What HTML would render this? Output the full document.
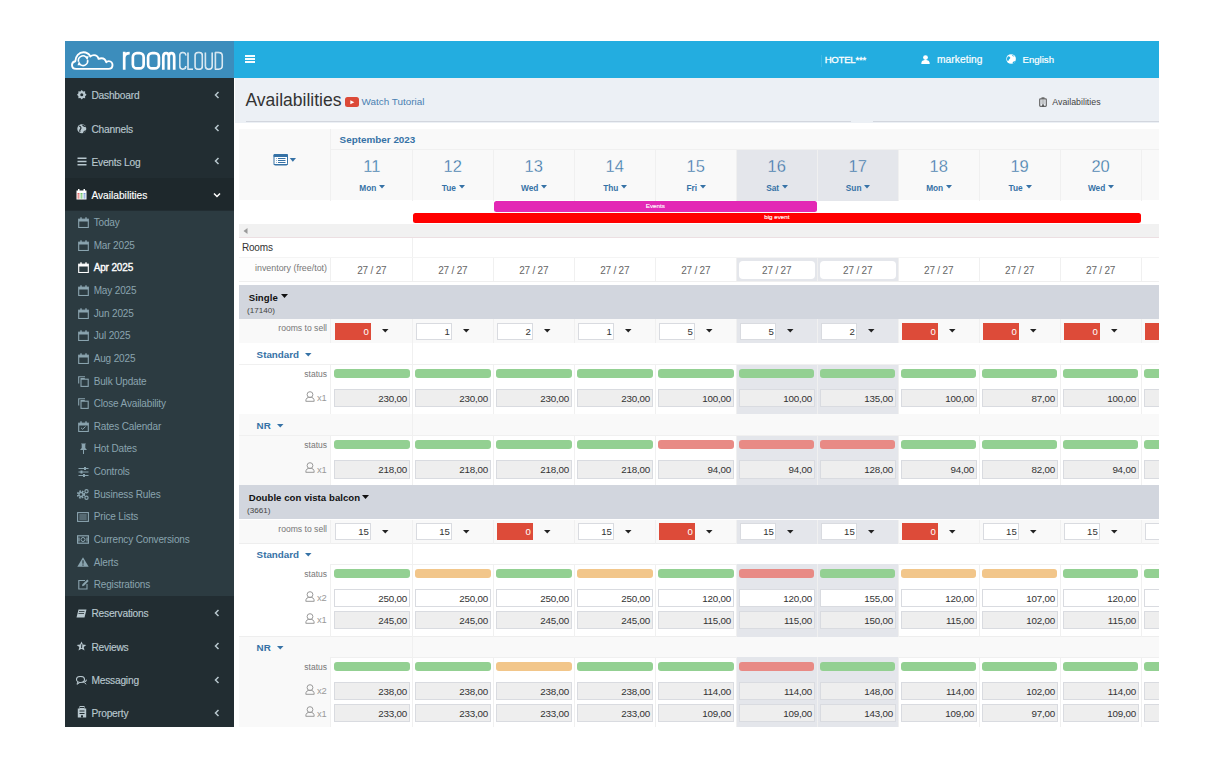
<!DOCTYPE html><html><head><meta charset="utf-8"><style>
html,body{margin:0;padding:0;background:#fff;width:1224px;height:768px;overflow:hidden;position:relative;font-family:"Liberation Sans", sans-serif}
.t{position:absolute;white-space:nowrap;}
.r{position:absolute;box-sizing:border-box;}
#clip{position:absolute;left:0;top:0;width:1159px;height:727px;overflow:hidden;}
</style></head><body>
<div class="r" style="left:65.00px;top:41.00px;width:169.00px;height:37.00px;background:#3c8dbc"></div>
<div class="r" style="left:234.00px;top:41.00px;width:925.00px;height:37.00px;background:#23ade0"></div>
<svg class="r" style="left:68.00px;top:46.00px;" width="50" height="28" viewBox="0 0 50 28"><path d="M8.2 22.9 C5.5 22.9 4 21.2 4 19 C4 17 5.3 15.6 7.3 15.2 C7.5 10 11 6.3 15.5 6.3 C18.6 6.3 21 8 22.4 10.4 C23.2 9.6 24.6 9.1 26 9.1 C28.3 9.1 30 10.6 30.6 12.9 C31.3 12.5 32.3 12.2 33.5 12.2 C35.8 12.2 37.6 13.8 38.3 16.3 C38.8 15.6 39.8 15.1 40.8 15.1 C43.1 15.1 44.5 17 44.5 19 C44.5 21.2 43 22.9 40.5 22.9 Z" fill="none" stroke="#fff" stroke-width="1.9" stroke-linejoin="round"/><path d="M10.6 15.8 A4.6 4.6 0 0 1 18.0 11.0 M19.6 14.0 A4.6 4.6 0 0 1 12.2 18.5" fill="none" stroke="#fff" stroke-width="1.6"/><path d="M16.6 10.3 L20.7 10.2 L19.3 14.2 Z M13.6 19.2 L9.5 19.3 L10.9 15.3 Z" fill="#fff"/></svg>
<svg class="r" style="left:118.00px;top:46.00px;" width="110" height="28" viewBox="0 0 110 28"><g fill="none" stroke="#fff" stroke-width="2.7"><path d="M6.2 23.8 V5.8 M6.2 11.5 C6.5 8.5 8.5 7.15 11.7 7.15"/><rect x="14.85" y="7.15" width="10.8" height="15.3" rx="4"/><rect x="30.1" y="7.15" width="10.8" height="15.3" rx="4"/><path d="M45.3 23.8 V10.8 C45.3 8.3 46.6 7.15 48.1 7.15 C49.6 7.15 50.8 8.3 50.8 10.8 V23.8 M50.8 10.8 C50.8 8.3 52 7.15 53.4 7.15 C54.9 7.15 56.2 8.3 56.2 10.8 V23.8"/></g><g fill="none" stroke="#fff" stroke-width="1.5" stroke-linejoin="round"><path d="M67.8 9.6 C67.8 7.4 66.6 6.5 64.8 6.5 C62.9 6.5 61.8 7.4 61.8 9.6 V20.1 C61.8 22.3 62.9 23.2 64.8 23.2 C66.6 23.2 67.8 22.3 67.8 20.1"/><path d="M70 6.5 V23.2 H75"/><rect x="77.1" y="6.5" width="7.2" height="16.7" rx="3"/><path d="M87.4 6.5 V20 C87.4 22.3 88.8 23.2 90.8 23.2 C92.8 23.2 94.2 22.3 94.2 20 V6.5"/><path d="M97.4 6.5 V23.2 H100.6 C103 23.2 104.3 22 104.3 19.6 V10.1 C104.3 7.7 103 6.5 100.6 6.5 Z"/></g><g fill="none" stroke="#3c8dbc" stroke-width="0.45" opacity="0.55"><path d="M67.8 9.6 C67.8 7.4 66.6 6.5 64.8 6.5 C62.9 6.5 61.8 7.4 61.8 9.6 V20.1 C61.8 22.3 62.9 23.2 64.8 23.2 C66.6 23.2 67.8 22.3 67.8 20.1"/><path d="M70 6.5 V23.2 H75"/><rect x="77.1" y="6.5" width="7.2" height="16.7" rx="3"/><path d="M87.4 6.5 V20 C87.4 22.3 88.8 23.2 90.8 23.2 C92.8 23.2 94.2 22.3 94.2 20 V6.5"/><path d="M97.4 6.5 V23.2 H100.6 C103 23.2 104.3 22 104.3 19.6 V10.1 C104.3 7.7 103 6.5 100.6 6.5 Z"/></g></svg>
<div class="r" style="left:245.00px;top:55.00px;width:10.00px;height:2.00px;background:#f4fcff"></div>
<div class="r" style="left:245.00px;top:58.10px;width:10.00px;height:2.00px;background:#f4fcff"></div>
<div class="r" style="left:245.00px;top:61.20px;width:10.00px;height:2.00px;background:#f4fcff"></div>
<div class="r" style="left:821.00px;top:55.00px;width:1.00px;height:12.00px;background:rgba(255,255,255,0.12)"></div>
<div class="t" style="left:824.70px;top:55.07px;width:600px;font-size:9.6px;line-height:9.6px;color:#fff;font-weight:normal;text-align:left;letter-spacing:-0.25px;-webkit-text-stroke:0.3px #fff">HOTEL***</div>
<svg class="r" style="left:920.50px;top:55.00px;" width="9" height="9" viewBox="0 0 9 9"><circle cx="4.5" cy="2.6" r="2.4" fill="#fff"/><path d="M0.3 9 C0.3 5.8 2 5.1 4.5 5.1 C7 5.1 8.7 5.8 8.7 9 Z" fill="#fff"/></svg>
<div class="t" style="left:937.00px;top:54.67px;width:600px;font-size:10.2px;line-height:10.2px;color:#fff;font-weight:normal;text-align:left;letter-spacing:0.1px;-webkit-text-stroke:0.2px #fff">marketing</div>
<svg class="r" style="left:1005.50px;top:54.30px;" width="11" height="11" viewBox="0 0 11 11"><circle cx="5.1" cy="5" r="4.8" fill="#fff"/><path d="M2.3 2.2 C3.6 2.4 4.6 3.2 4.2 4.3 C3.8 5.2 2.8 5.4 2.6 6.6 C2.5 7.3 1.5 7 1.1 6.2 C0.6 4.6 1.2 3.1 2.3 2.2 Z M6.6 9.3 C6.5 8.2 7.3 7.4 8.3 7.3 C9 7.3 9.2 7.8 8.9 8.3 C8.3 9 7.5 9.3 6.6 9.3 Z M5.6 0.6 C6.4 1.4 7.8 1.6 8.6 2.3 C7.6 2.6 6.2 2.4 5.6 0.6 Z" fill="#23ade0"/></svg>
<div class="t" style="left:1022.50px;top:55.17px;width:600px;font-size:9.6px;line-height:9.6px;color:#fff;font-weight:normal;text-align:left;-webkit-text-stroke:0.2px #fff">English</div>
<div class="r" style="left:65.00px;top:78.00px;width:169.00px;height:649.00px;background:#222d32"></div>
<div class="r" style="left:65.00px;top:178.20px;width:169.00px;height:32.30px;background:#1e282c"></div>
<div class="r" style="left:65.00px;top:210.50px;width:169.00px;height:385.00px;background:#2c3b41"></div>
<div class="t" style="left:91.40px;top:90.97px;width:600px;font-size:10.2px;line-height:10.2px;color:#b8c7ce;font-weight:normal;text-align:left;letter-spacing:-0.2px;-webkit-text-stroke:0.15px #b8c7ce">Dashboard</div>
<svg class="r" style="left:214.00px;top:90.50px;" width="6" height="8" viewBox="0 0 6 8"><path d="M4.5 1 L1.5 4 L4.5 7" fill="none" stroke="#b8c7ce" stroke-width="1.5"/></svg>
<div class="t" style="left:91.40px;top:124.67px;width:600px;font-size:10.2px;line-height:10.2px;color:#b8c7ce;font-weight:normal;text-align:left;letter-spacing:-0.2px;-webkit-text-stroke:0.15px #b8c7ce">Channels</div>
<svg class="r" style="left:214.00px;top:124.20px;" width="6" height="8" viewBox="0 0 6 8"><path d="M4.5 1 L1.5 4 L4.5 7" fill="none" stroke="#b8c7ce" stroke-width="1.5"/></svg>
<div class="t" style="left:91.40px;top:157.87px;width:600px;font-size:10.2px;line-height:10.2px;color:#b8c7ce;font-weight:normal;text-align:left;letter-spacing:-0.2px;-webkit-text-stroke:0.15px #b8c7ce">Events Log</div>
<svg class="r" style="left:214.00px;top:157.40px;" width="6" height="8" viewBox="0 0 6 8"><path d="M4.5 1 L1.5 4 L4.5 7" fill="none" stroke="#b8c7ce" stroke-width="1.5"/></svg>
<div class="t" style="left:91.40px;top:190.67px;width:600px;font-size:10.2px;line-height:10.2px;color:#fff;font-weight:normal;text-align:left;letter-spacing:0px;-webkit-text-stroke:0.15px #fff">Availabilities</div>
<svg class="r" style="left:213.00px;top:192.20px;" width="8" height="6" viewBox="0 0 8 6"><path d="M1 1.5 L4 4.5 L7 1.5" fill="none" stroke="#fff" stroke-width="1.5"/></svg>
<div class="t" style="left:91.40px;top:609.37px;width:600px;font-size:10.2px;line-height:10.2px;color:#b8c7ce;font-weight:normal;text-align:left;letter-spacing:-0.2px;-webkit-text-stroke:0.15px #b8c7ce">Reservations</div>
<svg class="r" style="left:214.00px;top:609.00px;" width="6" height="8" viewBox="0 0 6 8"><path d="M4.5 1 L1.5 4 L4.5 7" fill="none" stroke="#b8c7ce" stroke-width="1.5"/></svg>
<div class="t" style="left:91.40px;top:642.77px;width:600px;font-size:10.2px;line-height:10.2px;color:#b8c7ce;font-weight:normal;text-align:left;letter-spacing:-0.2px;-webkit-text-stroke:0.15px #b8c7ce">Reviews</div>
<svg class="r" style="left:214.00px;top:642.40px;" width="6" height="8" viewBox="0 0 6 8"><path d="M4.5 1 L1.5 4 L4.5 7" fill="none" stroke="#b8c7ce" stroke-width="1.5"/></svg>
<div class="t" style="left:91.40px;top:675.87px;width:600px;font-size:10.2px;line-height:10.2px;color:#b8c7ce;font-weight:normal;text-align:left;letter-spacing:-0.2px;-webkit-text-stroke:0.15px #b8c7ce">Messaging</div>
<svg class="r" style="left:214.00px;top:675.50px;" width="6" height="8" viewBox="0 0 6 8"><path d="M4.5 1 L1.5 4 L4.5 7" fill="none" stroke="#b8c7ce" stroke-width="1.5"/></svg>
<div class="t" style="left:91.40px;top:709.07px;width:600px;font-size:10.2px;line-height:10.2px;color:#b8c7ce;font-weight:normal;text-align:left;letter-spacing:-0.2px;-webkit-text-stroke:0.15px #b8c7ce">Property</div>
<svg class="r" style="left:214.00px;top:708.70px;" width="6" height="8" viewBox="0 0 6 8"><path d="M4.5 1 L1.5 4 L4.5 7" fill="none" stroke="#b8c7ce" stroke-width="1.5"/></svg>
<svg class="r" style="left:76.90px;top:90.20px;" width="10" height="10" viewBox="0 0 10 10"><polygon points="9.55,4.75 8.08,6.13 8.14,8.14 6.13,8.08 4.75,9.55 3.37,8.08 1.36,8.14 1.42,6.13 -0.05,4.75 1.42,3.37 1.36,1.36 3.37,1.42 4.75,-0.05 6.13,1.42 8.14,1.36 8.08,3.37" fill="#b8c7ce"/><circle cx="4.75" cy="4.75" r="1.5" fill="#222d32"/></svg>
<svg class="r" style="left:77.00px;top:124.40px;" width="10" height="10" viewBox="0 0 10 10"><circle cx="4.8" cy="4.8" r="4.5" fill="#b8c7ce"/><path d="M2.2 2 C4 2.8 4.5 4 3.5 5 C2.5 6 2.5 7 3 8.3 M6.5 8.8 C6.8 7.6 7.8 7 8.9 6.8 M5.5 1 C6.5 2 7.5 2.5 8.8 2.6" fill="none" stroke="#222d32" stroke-width="1.1"/></svg>
<svg class="r" style="left:77.00px;top:156.50px;" width="10" height="9" viewBox="0 0 10 9"><path d="M0.5 1.2 H9.5 M0.5 4.5 H9.5 M0.5 7.8 H9.5" stroke="#b8c7ce" stroke-width="1.5"/></svg>
<svg class="r" style="left:76.20px;top:189.40px;" width="11" height="11" viewBox="0 0 11 11"><rect x="0.5" y="1.5" width="10" height="9" fill="#fff"/><rect x="2" y="0" width="1.5" height="3" fill="#fff"/><rect x="7.5" y="0" width="1.5" height="3" fill="#fff"/><rect x="1.5" y="4" width="2" height="5.5" fill="#e06a6a"/><rect x="4.5" y="4" width="2" height="5.5" fill="#6ac46a"/><rect x="7.5" y="4" width="2" height="5.5" fill="#7a9ad8"/><path d="M1 6 H10 M1 8 H10" stroke="#fff" stroke-width="0.6"/></svg>
<svg class="r" style="left:76.00px;top:608.80px;" width="11" height="9" viewBox="0 0 11 9"><path d="M2.5 0.5 H10.5 L8.5 8.5 H0.5 Z" fill="#b8c7ce"/><path d="M3 2.5 H8.5 M2.5 4.5 H8" stroke="#222d32" stroke-width="0.8"/></svg>
<svg class="r" style="left:76.00px;top:641.30px;" width="11" height="10" viewBox="0 0 11 10"><path d="M5.5 0.5 L6.9 3.6 L10.3 3.9 L7.7 6.1 L8.5 9.5 L5.5 7.7 L2.5 9.5 L3.3 6.1 L0.7 3.9 L4.1 3.6 Z" fill="#b8c7ce"/><path d="M5.8 3.2 L5.6 7" stroke="#222d32" stroke-width="1"/></svg>
<svg class="r" style="left:76.00px;top:675.50px;" width="11" height="9" viewBox="0 0 11 9"><ellipse cx="4.5" cy="3.5" rx="4" ry="3" fill="none" stroke="#b8c7ce" stroke-width="1.1"/><path d="M6.5 6.3 C8.8 6.4 10.4 5.2 10.3 3.6" fill="none" stroke="#b8c7ce" stroke-width="1.1"/><path d="M1.8 6 L1 8.3 L3.8 6.5 M8.5 6.5 L10 8.3" fill="none" stroke="#b8c7ce" stroke-width="1"/></svg>
<svg class="r" style="left:76.80px;top:706.20px;" width="10" height="12" viewBox="0 0 10 12"><rect x="3" y="0.5" width="4" height="2" fill="none" stroke="#b8c7ce" stroke-width="1"/><rect x="0.8" y="2.5" width="8.4" height="9" fill="#b8c7ce"/><path d="M2.5 5 H7.5 M2.5 7.5 H7.5" stroke="#222d32" stroke-width="1"/><rect x="4" y="9.3" width="2" height="2.2" fill="#222d32"/></svg>
<div class="t" style="left:93.70px;top:218.23px;width:600px;font-size:10px;line-height:10px;color:#8aa4af;font-weight:normal;text-align:left;letter-spacing:-0.15px">Today</div>
<svg class="r" style="left:78.20px;top:217.20px;" width="11" height="11" viewBox="0 0 11 11"><rect x="0.7" y="2.2" width="9.6" height="8.3" fill="none" stroke="#8aa4af" stroke-width="1.1"/><rect x="0.7" y="2.2" width="9.6" height="2.3" fill="#8aa4af"/><rect x="2.3" y="0.3" width="1.4" height="3" fill="#8aa4af"/><rect x="7.3" y="0.3" width="1.4" height="3" fill="#8aa4af"/></svg>
<div class="t" style="left:93.70px;top:240.85px;width:600px;font-size:10px;line-height:10px;color:#8aa4af;font-weight:normal;text-align:left;letter-spacing:-0.15px">Mar 2025</div>
<svg class="r" style="left:78.20px;top:239.82px;" width="11" height="11" viewBox="0 0 11 11"><rect x="0.7" y="2.2" width="9.6" height="8.3" fill="none" stroke="#8aa4af" stroke-width="1.1"/><rect x="0.7" y="2.2" width="9.6" height="2.3" fill="#8aa4af"/><rect x="2.3" y="0.3" width="1.4" height="3" fill="#8aa4af"/><rect x="7.3" y="0.3" width="1.4" height="3" fill="#8aa4af"/></svg>
<div class="t" style="left:93.70px;top:263.48px;width:600px;font-size:10px;line-height:10px;color:#fff;font-weight:normal;text-align:left;letter-spacing:-0.15px;-webkit-text-stroke:0.35px #fff">Apr 2025</div>
<svg class="r" style="left:78.20px;top:262.44px;" width="11" height="11" viewBox="0 0 11 11"><rect x="0.7" y="2.2" width="9.6" height="8.3" fill="none" stroke="#fff" stroke-width="1.1"/><rect x="0.7" y="2.2" width="9.6" height="2.3" fill="#fff"/><rect x="2.3" y="0.3" width="1.4" height="3" fill="#fff"/><rect x="7.3" y="0.3" width="1.4" height="3" fill="#fff"/></svg>
<div class="t" style="left:93.70px;top:286.10px;width:600px;font-size:10px;line-height:10px;color:#8aa4af;font-weight:normal;text-align:left;letter-spacing:-0.15px">May 2025</div>
<svg class="r" style="left:78.20px;top:285.06px;" width="11" height="11" viewBox="0 0 11 11"><rect x="0.7" y="2.2" width="9.6" height="8.3" fill="none" stroke="#8aa4af" stroke-width="1.1"/><rect x="0.7" y="2.2" width="9.6" height="2.3" fill="#8aa4af"/><rect x="2.3" y="0.3" width="1.4" height="3" fill="#8aa4af"/><rect x="7.3" y="0.3" width="1.4" height="3" fill="#8aa4af"/></svg>
<div class="t" style="left:93.70px;top:308.72px;width:600px;font-size:10px;line-height:10px;color:#8aa4af;font-weight:normal;text-align:left;letter-spacing:-0.15px">Jun 2025</div>
<svg class="r" style="left:78.20px;top:307.68px;" width="11" height="11" viewBox="0 0 11 11"><rect x="0.7" y="2.2" width="9.6" height="8.3" fill="none" stroke="#8aa4af" stroke-width="1.1"/><rect x="0.7" y="2.2" width="9.6" height="2.3" fill="#8aa4af"/><rect x="2.3" y="0.3" width="1.4" height="3" fill="#8aa4af"/><rect x="7.3" y="0.3" width="1.4" height="3" fill="#8aa4af"/></svg>
<div class="t" style="left:93.70px;top:331.34px;width:600px;font-size:10px;line-height:10px;color:#8aa4af;font-weight:normal;text-align:left;letter-spacing:-0.15px">Jul 2025</div>
<svg class="r" style="left:78.20px;top:330.30px;" width="11" height="11" viewBox="0 0 11 11"><rect x="0.7" y="2.2" width="9.6" height="8.3" fill="none" stroke="#8aa4af" stroke-width="1.1"/><rect x="0.7" y="2.2" width="9.6" height="2.3" fill="#8aa4af"/><rect x="2.3" y="0.3" width="1.4" height="3" fill="#8aa4af"/><rect x="7.3" y="0.3" width="1.4" height="3" fill="#8aa4af"/></svg>
<div class="t" style="left:93.70px;top:353.95px;width:600px;font-size:10px;line-height:10px;color:#8aa4af;font-weight:normal;text-align:left;letter-spacing:-0.15px">Aug 2025</div>
<svg class="r" style="left:78.20px;top:352.92px;" width="11" height="11" viewBox="0 0 11 11"><rect x="0.7" y="2.2" width="9.6" height="8.3" fill="none" stroke="#8aa4af" stroke-width="1.1"/><rect x="0.7" y="2.2" width="9.6" height="2.3" fill="#8aa4af"/><rect x="2.3" y="0.3" width="1.4" height="3" fill="#8aa4af"/><rect x="7.3" y="0.3" width="1.4" height="3" fill="#8aa4af"/></svg>
<div class="t" style="left:93.70px;top:376.57px;width:600px;font-size:10px;line-height:10px;color:#8aa4af;font-weight:normal;text-align:left;letter-spacing:-0.15px">Bulk Update</div>
<svg class="r" style="left:78.20px;top:375.54px;" width="11" height="11" viewBox="0 0 11 11"><path d="M0.7 7.5 V0.7 H7" fill="none" stroke="#8aa4af" stroke-width="1.1"/><path d="M2.6 2.5 H6.8" fill="none" stroke="#8aa4af" stroke-width="1"/><rect x="3" y="3.2" width="7.2" height="7.2" fill="none" stroke="#8aa4af" stroke-width="1.1"/></svg>
<div class="t" style="left:93.70px;top:399.19px;width:600px;font-size:10px;line-height:10px;color:#8aa4af;font-weight:normal;text-align:left;letter-spacing:-0.15px">Close Availability</div>
<svg class="r" style="left:78.20px;top:398.16px;" width="11" height="11" viewBox="0 0 11 11"><path d="M0.7 7.5 V0.7 H7" fill="none" stroke="#8aa4af" stroke-width="1.1"/><path d="M2.6 2.5 H6.8" fill="none" stroke="#8aa4af" stroke-width="1"/><rect x="3" y="3.2" width="7.2" height="7.2" fill="none" stroke="#8aa4af" stroke-width="1.1"/></svg>
<div class="t" style="left:93.70px;top:421.81px;width:600px;font-size:10px;line-height:10px;color:#8aa4af;font-weight:normal;text-align:left;letter-spacing:-0.15px">Rates Calendar</div>
<svg class="r" style="left:78.20px;top:420.78px;" width="11" height="11" viewBox="0 0 11 11"><rect x="0.7" y="2.2" width="9.6" height="8.3" fill="none" stroke="#8aa4af" stroke-width="1.1"/><rect x="0.7" y="2.2" width="9.6" height="2.3" fill="#8aa4af"/><rect x="2.3" y="0.3" width="1.4" height="3" fill="#8aa4af"/><rect x="7.3" y="0.3" width="1.4" height="3" fill="#8aa4af"/><path d="M3 6.8 L4.6 8.3 L7.5 5.5" fill="none" stroke="#8aa4af" stroke-width="1"/></svg>
<div class="t" style="left:93.70px;top:444.44px;width:600px;font-size:10px;line-height:10px;color:#8aa4af;font-weight:normal;text-align:left;letter-spacing:-0.15px">Hot Dates</div>
<svg class="r" style="left:78.80px;top:443.40px;" width="9" height="11" viewBox="0 0 9 11"><path d="M2 0.5 H7 L6.3 1.5 V5 L8 7 H1 L2.7 5 V1.5 Z" fill="#8aa4af"/><rect x="4" y="7" width="1" height="4" fill="#8aa4af"/></svg>
<div class="t" style="left:93.70px;top:467.06px;width:600px;font-size:10px;line-height:10px;color:#8aa4af;font-weight:normal;text-align:left;letter-spacing:-0.15px">Controls</div>
<svg class="r" style="left:77.60px;top:466.52px;" width="11" height="10" viewBox="0 0 11 10"><path d="M0.5 1.5 H10.5 M0.5 5 H10.5 M0.5 8.5 H10.5" stroke="#8aa4af" stroke-width="1"/><rect x="6" y="0" width="2" height="3" fill="#8aa4af"/><rect x="2.5" y="3.5" width="2" height="3" fill="#8aa4af"/><rect x="5" y="7" width="2" height="3" fill="#8aa4af"/></svg>
<div class="t" style="left:93.70px;top:489.68px;width:600px;font-size:10px;line-height:10px;color:#8aa4af;font-weight:normal;text-align:left;letter-spacing:-0.15px">Business Rules</div>
<svg class="r" style="left:77.30px;top:488.64px;" width="12" height="11" viewBox="0 0 12 11"><circle cx="4" cy="5.5" r="3.2" fill="none" stroke="#8aa4af" stroke-width="2" stroke-dasharray="1.6 1"/><circle cx="4" cy="5.5" r="2" fill="none" stroke="#8aa4af" stroke-width="1.3"/><circle cx="9.5" cy="2.3" r="1.6" fill="none" stroke="#8aa4af" stroke-width="1.2"/><circle cx="9.5" cy="8.7" r="1.6" fill="none" stroke="#8aa4af" stroke-width="1.2"/></svg>
<div class="t" style="left:93.70px;top:512.29px;width:600px;font-size:10px;line-height:10px;color:#8aa4af;font-weight:normal;text-align:left;letter-spacing:-0.15px">Price Lists</div>
<svg class="r" style="left:77.30px;top:511.76px;" width="12" height="10" viewBox="0 0 12 10"><rect x="0.6" y="0.6" width="10.8" height="8.8" fill="none" stroke="#8aa4af" stroke-width="1.1"/><path d="M2.3 3 H9.7 M2.3 5 H9.7 M2.3 7 H9.7" stroke="#8aa4af" stroke-width="0.9"/></svg>
<div class="t" style="left:93.70px;top:534.91px;width:600px;font-size:10px;line-height:10px;color:#8aa4af;font-weight:normal;text-align:left;letter-spacing:-0.15px">Currency Conversions</div>
<svg class="r" style="left:77.30px;top:534.88px;" width="12" height="9" viewBox="0 0 12 9"><rect x="0.6" y="0.8" width="10.8" height="7.4" fill="none" stroke="#8aa4af" stroke-width="1.2"/><circle cx="6" cy="4.5" r="2" fill="none" stroke="#8aa4af" stroke-width="1"/><path d="M2 2.5 V6.5 M10 2.5 V6.5" stroke="#8aa4af" stroke-width="1.2"/></svg>
<div class="t" style="left:93.70px;top:557.53px;width:600px;font-size:10px;line-height:10px;color:#8aa4af;font-weight:normal;text-align:left;letter-spacing:-0.15px">Alerts</div>
<svg class="r" style="left:77.30px;top:557.00px;" width="12" height="10" viewBox="0 0 12 10"><path d="M6 0.3 L11.7 9.7 H0.3 Z" fill="#8aa4af"/><rect x="5.4" y="3.3" width="1.2" height="3.4" fill="#2c3b41"/><rect x="5.4" y="7.5" width="1.2" height="1.2" fill="#2c3b41"/></svg>
<div class="t" style="left:93.70px;top:580.15px;width:600px;font-size:10px;line-height:10px;color:#8aa4af;font-weight:normal;text-align:left;letter-spacing:-0.15px">Registrations</div>
<svg class="r" style="left:77.80px;top:579.12px;" width="11" height="11" viewBox="0 0 11 11"><path d="M7 1.5 H0.8 V10 H9 V5" fill="none" stroke="#8aa4af" stroke-width="1.1"/><path d="M4 7.2 L4.5 5.3 L9.3 0.6 L10.7 2 L6 6.7 Z" fill="#8aa4af"/></svg>
<div class="r" style="left:234.00px;top:78.00px;width:925.00px;height:649.00px;background:#ecf0f5"></div>
<div class="r" style="left:234.00px;top:78.00px;width:1.20px;height:649.00px;background:#fff"></div>
<div class="t" style="left:245.50px;top:92.29px;width:600px;font-size:17.5px;line-height:17.5px;color:#333;font-weight:normal;text-align:left;">Availabilities</div>
<div class="r" style="left:345.20px;top:96.80px;width:13.50px;height:10.00px;background:#dc4a38;border-radius:2.5px"></div>
<svg class="r" style="left:350.00px;top:99.60px;" width="5" height="5" viewBox="0 0 5 5"><path d="M0.3 0.3 L4.3 2.3 L0.3 4.3 Z" fill="#fff"/></svg>
<div class="t" style="left:361.60px;top:97.42px;width:600px;font-size:9.9px;line-height:9.9px;color:#4a80b2;font-weight:normal;text-align:left;">Watch Tutorial</div>
<div class="t" style="left:1052.30px;top:97.95px;width:600px;font-size:8.8px;line-height:8.8px;color:#444;font-weight:normal;text-align:left;">Availabilities</div>
<svg class="r" style="left:1039.00px;top:96.80px;" width="8" height="10" viewBox="0 0 8 10"><rect x="0.7" y="1.8" width="6.6" height="7.5" rx="0.8" fill="none" stroke="#666" stroke-width="1.2"/><rect x="2.5" y="0.3" width="3" height="1.8" fill="#666"/><path d="M2.3 4 H5.7 M2.3 6 H5.7" stroke="#888" stroke-width="0.9"/><rect x="3.3" y="7.3" width="1.4" height="2" fill="#333"/></svg>
<div class="r" style="left:245.50px;top:120.60px;width:605.00px;height:1.60px;background:#d2d6de"></div>
<div class="r" style="left:873.20px;top:120.60px;width:285.80px;height:1.60px;background:#d2d6de"></div>
<div class="r" style="left:235.20px;top:122.60px;width:923.80px;height:604.40px;background:#fff"></div>
<div id="clip">
<div class="r" style="left:239.00px;top:129.30px;width:920.00px;height:71.20px;background:#f9f9f9"></div>
<div class="r" style="left:330.50px;top:149.00px;width:828.50px;height:1.00px;background:#f0f0f0"></div>
<div class="r" style="left:329.80px;top:149.00px;width:1.00px;height:51.50px;background:#f0f0f0"></div>
<div class="r" style="left:411.90px;top:149.00px;width:1.00px;height:51.50px;background:#f0f0f0"></div>
<div class="r" style="left:492.87px;top:149.00px;width:1.00px;height:51.50px;background:#f0f0f0"></div>
<div class="r" style="left:573.84px;top:149.00px;width:1.00px;height:51.50px;background:#f0f0f0"></div>
<div class="r" style="left:654.81px;top:149.00px;width:1.00px;height:51.50px;background:#f0f0f0"></div>
<div class="r" style="left:735.78px;top:149.00px;width:1.00px;height:51.50px;background:#f0f0f0"></div>
<div class="r" style="left:816.75px;top:149.00px;width:1.00px;height:51.50px;background:#f0f0f0"></div>
<div class="r" style="left:897.72px;top:149.00px;width:1.00px;height:51.50px;background:#f0f0f0"></div>
<div class="r" style="left:978.69px;top:149.00px;width:1.00px;height:51.50px;background:#f0f0f0"></div>
<div class="r" style="left:1059.66px;top:149.00px;width:1.00px;height:51.50px;background:#f0f0f0"></div>
<div class="r" style="left:1140.63px;top:149.00px;width:1.00px;height:51.50px;background:#f0f0f0"></div>
<div class="r" style="left:330.00px;top:129.30px;width:1.00px;height:71.20px;background:#f0f0f0"></div>
<div class="r" style="left:736.78px;top:150.00px;width:79.97px;height:50.50px;background:#e4e6eb"></div>
<div class="r" style="left:817.75px;top:150.00px;width:79.97px;height:50.50px;background:#e4e6eb"></div>
<div class="t" style="left:339.60px;top:135.12px;width:600px;font-size:9.9px;line-height:9.9px;color:#3672a6;font-weight:bold;text-align:left;">September 2023</div>
<div class="t" style="left:71.80px;top:157.73px;width:600px;font-size:16.5px;line-height:16.5px;color:#3672a6;font-weight:normal;text-align:center;-webkit-text-stroke:0.3px #f9f9f9">11</div>
<div class="t" style="left:67.80px;top:184.17px;width:600px;font-size:8.3px;line-height:8.3px;color:#3672a6;font-weight:bold;text-align:center;">Mon</div>
<svg class="r" style="left:379.15px;top:185.40px;" width="7" height="4" viewBox="0 0 7 4"><path d="M0 0 L6 0 L3 3.5 Z" fill="#3672a6"/></svg>
<div class="t" style="left:152.78px;top:157.73px;width:600px;font-size:16.5px;line-height:16.5px;color:#3672a6;font-weight:normal;text-align:center;-webkit-text-stroke:0.3px #f9f9f9">12</div>
<div class="t" style="left:148.78px;top:184.17px;width:600px;font-size:8.3px;line-height:8.3px;color:#3672a6;font-weight:bold;text-align:center;">Tue</div>
<svg class="r" style="left:458.98px;top:185.40px;" width="7" height="4" viewBox="0 0 7 4"><path d="M0 0 L6 0 L3 3.5 Z" fill="#3672a6"/></svg>
<div class="t" style="left:233.76px;top:157.73px;width:600px;font-size:16.5px;line-height:16.5px;color:#3672a6;font-weight:normal;text-align:center;-webkit-text-stroke:0.3px #f9f9f9">13</div>
<div class="t" style="left:229.76px;top:184.17px;width:600px;font-size:8.3px;line-height:8.3px;color:#3672a6;font-weight:bold;text-align:center;">Wed</div>
<svg class="r" style="left:540.96px;top:185.40px;" width="7" height="4" viewBox="0 0 7 4"><path d="M0 0 L6 0 L3 3.5 Z" fill="#3672a6"/></svg>
<div class="t" style="left:314.74px;top:157.73px;width:600px;font-size:16.5px;line-height:16.5px;color:#3672a6;font-weight:normal;text-align:center;-webkit-text-stroke:0.3px #f9f9f9">14</div>
<div class="t" style="left:310.74px;top:184.17px;width:600px;font-size:8.3px;line-height:8.3px;color:#3672a6;font-weight:bold;text-align:center;">Thu</div>
<svg class="r" style="left:620.94px;top:185.40px;" width="7" height="4" viewBox="0 0 7 4"><path d="M0 0 L6 0 L3 3.5 Z" fill="#3672a6"/></svg>
<div class="t" style="left:395.72px;top:157.73px;width:600px;font-size:16.5px;line-height:16.5px;color:#3672a6;font-weight:normal;text-align:center;-webkit-text-stroke:0.3px #f9f9f9">15</div>
<div class="t" style="left:391.72px;top:184.17px;width:600px;font-size:8.3px;line-height:8.3px;color:#3672a6;font-weight:bold;text-align:center;">Fri</div>
<svg class="r" style="left:699.92px;top:185.40px;" width="7" height="4" viewBox="0 0 7 4"><path d="M0 0 L6 0 L3 3.5 Z" fill="#3672a6"/></svg>
<div class="t" style="left:476.70px;top:157.73px;width:600px;font-size:16.5px;line-height:16.5px;color:#3672a6;font-weight:normal;text-align:center;-webkit-text-stroke:0.3px #e4e6eb">16</div>
<div class="t" style="left:472.70px;top:184.17px;width:600px;font-size:8.3px;line-height:8.3px;color:#3672a6;font-weight:bold;text-align:center;">Sat</div>
<svg class="r" style="left:781.90px;top:185.40px;" width="7" height="4" viewBox="0 0 7 4"><path d="M0 0 L6 0 L3 3.5 Z" fill="#3672a6"/></svg>
<div class="t" style="left:557.68px;top:157.73px;width:600px;font-size:16.5px;line-height:16.5px;color:#3672a6;font-weight:normal;text-align:center;-webkit-text-stroke:0.3px #e4e6eb">17</div>
<div class="t" style="left:553.68px;top:184.17px;width:600px;font-size:8.3px;line-height:8.3px;color:#3672a6;font-weight:bold;text-align:center;">Sun</div>
<svg class="r" style="left:863.88px;top:185.40px;" width="7" height="4" viewBox="0 0 7 4"><path d="M0 0 L6 0 L3 3.5 Z" fill="#3672a6"/></svg>
<div class="t" style="left:638.66px;top:157.73px;width:600px;font-size:16.5px;line-height:16.5px;color:#3672a6;font-weight:normal;text-align:center;-webkit-text-stroke:0.3px #f9f9f9">18</div>
<div class="t" style="left:634.66px;top:184.17px;width:600px;font-size:8.3px;line-height:8.3px;color:#3672a6;font-weight:bold;text-align:center;">Mon</div>
<svg class="r" style="left:946.01px;top:185.40px;" width="7" height="4" viewBox="0 0 7 4"><path d="M0 0 L6 0 L3 3.5 Z" fill="#3672a6"/></svg>
<div class="t" style="left:719.64px;top:157.73px;width:600px;font-size:16.5px;line-height:16.5px;color:#3672a6;font-weight:normal;text-align:center;-webkit-text-stroke:0.3px #f9f9f9">19</div>
<div class="t" style="left:715.64px;top:184.17px;width:600px;font-size:8.3px;line-height:8.3px;color:#3672a6;font-weight:bold;text-align:center;">Tue</div>
<svg class="r" style="left:1025.84px;top:185.40px;" width="7" height="4" viewBox="0 0 7 4"><path d="M0 0 L6 0 L3 3.5 Z" fill="#3672a6"/></svg>
<div class="t" style="left:800.62px;top:157.73px;width:600px;font-size:16.5px;line-height:16.5px;color:#3672a6;font-weight:normal;text-align:center;-webkit-text-stroke:0.3px #f9f9f9">20</div>
<div class="t" style="left:796.62px;top:184.17px;width:600px;font-size:8.3px;line-height:8.3px;color:#3672a6;font-weight:bold;text-align:center;">Wed</div>
<svg class="r" style="left:1107.82px;top:185.40px;" width="7" height="4" viewBox="0 0 7 4"><path d="M0 0 L6 0 L3 3.5 Z" fill="#3672a6"/></svg>
<div class="t" style="left:881.60px;top:157.73px;width:600px;font-size:16.5px;line-height:16.5px;color:#3672a6;font-weight:normal;text-align:center;-webkit-text-stroke:0.3px #f9f9f9">21</div>
<div class="t" style="left:877.60px;top:184.17px;width:600px;font-size:8.3px;line-height:8.3px;color:#3672a6;font-weight:bold;text-align:center;">Thu</div>
<svg class="r" style="left:1187.80px;top:185.40px;" width="7" height="4" viewBox="0 0 7 4"><path d="M0 0 L6 0 L3 3.5 Z" fill="#3672a6"/></svg>
<svg class="r" style="left:273.00px;top:153.00px;" width="24" height="13" viewBox="0 0 24 13"><rect x="1" y="1.5" width="13.5" height="10.5" rx="1.2" fill="#fff" stroke="#3672a6" stroke-width="1"/><rect x="0.5" y="1" width="14.5" height="3" rx="1" fill="#3672a6"/><path d="M0.8 11.5 H14.7" stroke="#3672a6" stroke-width="1"/><path d="M5 5.5 H12.5 M5 7.5 H12.5 M5 9.5 H12.5" stroke="#3672a6" stroke-width="1"/><path d="M3 5.5 H4 M3 7.5 H4 M3 9.5 H4" stroke="#3672a6" stroke-width="1" opacity="0.5"/><path d="M16.7 5 L23 5 L19.85 8.7 Z" fill="#3672a6"/></svg>
<div class="r" style="left:494.00px;top:201.00px;width:322.70px;height:10.70px;background:#e328b5;border-radius:2.5px"></div>
<div class="t" style="left:355.30px;top:202.65px;width:600px;font-size:6.2px;line-height:6.2px;color:#fff;font-weight:normal;text-align:center;-webkit-text-stroke:0.15px #fff">Events</div>
<div class="r" style="left:412.70px;top:212.70px;width:728.10px;height:10.60px;background:#ff0000;border-radius:2.5px"></div>
<div class="t" style="left:476.80px;top:214.35px;width:600px;font-size:6.2px;line-height:6.2px;color:#fff;font-weight:normal;text-align:center;-webkit-text-stroke:0.15px #fff">big event</div>
<div class="r" style="left:238.50px;top:224.00px;width:920.50px;height:13.50px;background:#f1f1f1;border-bottom:1px solid #ecdfe2"></div>
<svg class="r" style="left:242.50px;top:228.00px;" width="5" height="6" viewBox="0 0 5 6"><path d="M4.5 0 L0.5 3 L4.5 6 Z" fill="#9a9a9a"/></svg>
<div class="t" style="left:241.90px;top:243.13px;width:600px;font-size:10px;line-height:10px;color:#333;font-weight:normal;text-align:left;letter-spacing:-0.15px">Rooms</div>
<div class="r" style="left:412.00px;top:237.50px;width:1.00px;height:20.30px;background:#f0f0f0"></div>
<div class="r" style="left:239.00px;top:257.30px;width:920.00px;height:1.00px;background:#f4f4f4"></div>
<div class="r" style="left:239.00px;top:258.30px;width:91.50px;height:22.70px;background:#fdfdfd"></div>
<div class="t" style="left:-273.00px;top:263.87px;width:600px;font-size:8.9px;line-height:8.9px;color:#777;font-weight:normal;text-align:right;">inventory (free/tot)</div>
<div class="r" style="left:329.80px;top:258.30px;width:1.00px;height:22.70px;background:#f0f0f0"></div>
<div class="t" style="left:71.80px;top:265.54px;width:600px;font-size:10px;line-height:10px;color:#666;font-weight:normal;text-align:center;letter-spacing:-0.2px">27 / 27</div>
<div class="r" style="left:411.90px;top:258.30px;width:1.00px;height:22.70px;background:#f0f0f0"></div>
<div class="t" style="left:152.78px;top:265.54px;width:600px;font-size:10px;line-height:10px;color:#666;font-weight:normal;text-align:center;letter-spacing:-0.2px">27 / 27</div>
<div class="r" style="left:492.87px;top:258.30px;width:1.00px;height:22.70px;background:#f0f0f0"></div>
<div class="t" style="left:233.76px;top:265.54px;width:600px;font-size:10px;line-height:10px;color:#666;font-weight:normal;text-align:center;letter-spacing:-0.2px">27 / 27</div>
<div class="r" style="left:573.84px;top:258.30px;width:1.00px;height:22.70px;background:#f0f0f0"></div>
<div class="t" style="left:314.74px;top:265.54px;width:600px;font-size:10px;line-height:10px;color:#666;font-weight:normal;text-align:center;letter-spacing:-0.2px">27 / 27</div>
<div class="r" style="left:654.81px;top:258.30px;width:1.00px;height:22.70px;background:#f0f0f0"></div>
<div class="t" style="left:395.72px;top:265.54px;width:600px;font-size:10px;line-height:10px;color:#666;font-weight:normal;text-align:center;letter-spacing:-0.2px">27 / 27</div>
<div class="r" style="left:735.78px;top:258.30px;width:1.00px;height:22.70px;background:#f0f0f0"></div>
<div class="r" style="left:736.78px;top:258.30px;width:79.97px;height:22.70px;background:#e4e6eb"></div>
<div class="r" style="left:739.10px;top:261.00px;width:75.80px;height:18.30px;background:#fff;border-radius:4px"></div>
<div class="t" style="left:476.70px;top:265.54px;width:600px;font-size:10px;line-height:10px;color:#666;font-weight:normal;text-align:center;letter-spacing:-0.2px">27 / 27</div>
<div class="r" style="left:816.75px;top:258.30px;width:1.00px;height:22.70px;background:#f0f0f0"></div>
<div class="r" style="left:817.75px;top:258.30px;width:79.97px;height:22.70px;background:#e4e6eb"></div>
<div class="r" style="left:820.08px;top:261.00px;width:75.80px;height:18.30px;background:#fff;border-radius:4px"></div>
<div class="t" style="left:557.68px;top:265.54px;width:600px;font-size:10px;line-height:10px;color:#666;font-weight:normal;text-align:center;letter-spacing:-0.2px">27 / 27</div>
<div class="r" style="left:897.72px;top:258.30px;width:1.00px;height:22.70px;background:#f0f0f0"></div>
<div class="t" style="left:638.66px;top:265.54px;width:600px;font-size:10px;line-height:10px;color:#666;font-weight:normal;text-align:center;letter-spacing:-0.2px">27 / 27</div>
<div class="r" style="left:978.69px;top:258.30px;width:1.00px;height:22.70px;background:#f0f0f0"></div>
<div class="t" style="left:719.64px;top:265.54px;width:600px;font-size:10px;line-height:10px;color:#666;font-weight:normal;text-align:center;letter-spacing:-0.2px">27 / 27</div>
<div class="r" style="left:1059.66px;top:258.30px;width:1.00px;height:22.70px;background:#f0f0f0"></div>
<div class="t" style="left:800.62px;top:265.54px;width:600px;font-size:10px;line-height:10px;color:#666;font-weight:normal;text-align:center;letter-spacing:-0.2px">27 / 27</div>
<div class="r" style="left:1140.63px;top:258.30px;width:1.00px;height:22.70px;background:#f0f0f0"></div>
<div class="t" style="left:881.60px;top:265.54px;width:600px;font-size:10px;line-height:10px;color:#666;font-weight:normal;text-align:center;letter-spacing:-0.2px">27 / 27</div>
<div class="r" style="left:239.00px;top:281.00px;width:920.00px;height:1.00px;background:#efefef"></div>
<div class="r" style="left:238.50px;top:285.00px;width:920.50px;height:34.30px;background:#d2d6de"></div>
<div class="t" style="left:248.70px;top:292.77px;width:600px;font-size:9.6px;line-height:9.6px;color:#111;font-weight:bold;text-align:left;letter-spacing:0.05px">Single</div>
<svg class="r" style="left:280.50px;top:294.30px;" width="8" height="5" viewBox="0 0 8 5"><path d="M0 0 L7 0 L3.5 4 Z" fill="#111"/></svg>
<div class="t" style="left:247.00px;top:306.74px;width:600px;font-size:8.1px;line-height:8.1px;color:#444;font-weight:normal;text-align:left;">(17140)</div>
<div class="r" style="left:239.00px;top:319.30px;width:920.00px;height:24.10px;background:#f9f9f9"></div>
<div class="r" style="left:239.00px;top:342.90px;width:920.00px;height:1.00px;background:#eeeeee"></div>
<div class="t" style="left:-273.00px;top:324.32px;width:600px;font-size:8.6px;line-height:8.6px;color:#777;font-weight:normal;text-align:right;">rooms to sell</div>
<div class="r" style="left:329.80px;top:319.30px;width:1.00px;height:24.10px;background:#f0f0f0"></div>
<div class="r" style="left:334.80px;top:322.50px;width:36.50px;height:17.00px;background:#dd4b39"></div>
<div class="t" style="left:-231.10px;top:326.97px;width:600px;font-size:9.6px;line-height:9.6px;color:#fff;font-weight:normal;text-align:right;">0</div>
<svg class="r" style="left:382.05px;top:329.30px;" width="7" height="4" viewBox="0 0 7 4"><path d="M0 0 L6.5 0 L3.25 3.5 Z" fill="#222"/></svg>
<div class="r" style="left:411.90px;top:319.30px;width:1.00px;height:24.10px;background:#f0f0f0"></div>
<div class="r" style="left:415.78px;top:322.50px;width:36.50px;height:17.00px;background:#fff;border:1px solid #d9dbe0"></div>
<div class="t" style="left:-150.12px;top:326.97px;width:600px;font-size:9.6px;line-height:9.6px;color:#333;font-weight:normal;text-align:right;">1</div>
<svg class="r" style="left:463.03px;top:329.30px;" width="7" height="4" viewBox="0 0 7 4"><path d="M0 0 L6.5 0 L3.25 3.5 Z" fill="#222"/></svg>
<div class="r" style="left:492.87px;top:319.30px;width:1.00px;height:24.10px;background:#f0f0f0"></div>
<div class="r" style="left:496.76px;top:322.50px;width:36.50px;height:17.00px;background:#fff;border:1px solid #d9dbe0"></div>
<div class="t" style="left:-69.14px;top:326.97px;width:600px;font-size:9.6px;line-height:9.6px;color:#333;font-weight:normal;text-align:right;">2</div>
<svg class="r" style="left:544.01px;top:329.30px;" width="7" height="4" viewBox="0 0 7 4"><path d="M0 0 L6.5 0 L3.25 3.5 Z" fill="#222"/></svg>
<div class="r" style="left:573.84px;top:319.30px;width:1.00px;height:24.10px;background:#f0f0f0"></div>
<div class="r" style="left:577.74px;top:322.50px;width:36.50px;height:17.00px;background:#fff;border:1px solid #d9dbe0"></div>
<div class="t" style="left:11.84px;top:326.97px;width:600px;font-size:9.6px;line-height:9.6px;color:#333;font-weight:normal;text-align:right;">1</div>
<svg class="r" style="left:624.99px;top:329.30px;" width="7" height="4" viewBox="0 0 7 4"><path d="M0 0 L6.5 0 L3.25 3.5 Z" fill="#222"/></svg>
<div class="r" style="left:654.81px;top:319.30px;width:1.00px;height:24.10px;background:#f0f0f0"></div>
<div class="r" style="left:658.72px;top:322.50px;width:36.50px;height:17.00px;background:#fff;border:1px solid #d9dbe0"></div>
<div class="t" style="left:92.82px;top:326.97px;width:600px;font-size:9.6px;line-height:9.6px;color:#333;font-weight:normal;text-align:right;">5</div>
<svg class="r" style="left:705.97px;top:329.30px;" width="7" height="4" viewBox="0 0 7 4"><path d="M0 0 L6.5 0 L3.25 3.5 Z" fill="#222"/></svg>
<div class="r" style="left:735.78px;top:319.30px;width:1.00px;height:24.10px;background:#f0f0f0"></div>
<div class="r" style="left:736.78px;top:319.30px;width:79.97px;height:24.10px;background:#e4e6eb"></div>
<div class="r" style="left:739.70px;top:322.50px;width:36.50px;height:17.00px;background:#fff;border:1px solid #d9dbe0"></div>
<div class="t" style="left:173.80px;top:326.97px;width:600px;font-size:9.6px;line-height:9.6px;color:#333;font-weight:normal;text-align:right;">5</div>
<svg class="r" style="left:786.95px;top:329.30px;" width="7" height="4" viewBox="0 0 7 4"><path d="M0 0 L6.5 0 L3.25 3.5 Z" fill="#222"/></svg>
<div class="r" style="left:816.75px;top:319.30px;width:1.00px;height:24.10px;background:#f0f0f0"></div>
<div class="r" style="left:817.75px;top:319.30px;width:79.97px;height:24.10px;background:#e4e6eb"></div>
<div class="r" style="left:820.68px;top:322.50px;width:36.50px;height:17.00px;background:#fff;border:1px solid #d9dbe0"></div>
<div class="t" style="left:254.78px;top:326.97px;width:600px;font-size:9.6px;line-height:9.6px;color:#333;font-weight:normal;text-align:right;">2</div>
<svg class="r" style="left:867.93px;top:329.30px;" width="7" height="4" viewBox="0 0 7 4"><path d="M0 0 L6.5 0 L3.25 3.5 Z" fill="#222"/></svg>
<div class="r" style="left:897.72px;top:319.30px;width:1.00px;height:24.10px;background:#f0f0f0"></div>
<div class="r" style="left:901.66px;top:322.50px;width:36.50px;height:17.00px;background:#dd4b39"></div>
<div class="t" style="left:335.76px;top:326.97px;width:600px;font-size:9.6px;line-height:9.6px;color:#fff;font-weight:normal;text-align:right;">0</div>
<svg class="r" style="left:948.91px;top:329.30px;" width="7" height="4" viewBox="0 0 7 4"><path d="M0 0 L6.5 0 L3.25 3.5 Z" fill="#222"/></svg>
<div class="r" style="left:978.69px;top:319.30px;width:1.00px;height:24.10px;background:#f0f0f0"></div>
<div class="r" style="left:982.64px;top:322.50px;width:36.50px;height:17.00px;background:#dd4b39"></div>
<div class="t" style="left:416.74px;top:326.97px;width:600px;font-size:9.6px;line-height:9.6px;color:#fff;font-weight:normal;text-align:right;">0</div>
<svg class="r" style="left:1029.89px;top:329.30px;" width="7" height="4" viewBox="0 0 7 4"><path d="M0 0 L6.5 0 L3.25 3.5 Z" fill="#222"/></svg>
<div class="r" style="left:1059.66px;top:319.30px;width:1.00px;height:24.10px;background:#f0f0f0"></div>
<div class="r" style="left:1063.62px;top:322.50px;width:36.50px;height:17.00px;background:#dd4b39"></div>
<div class="t" style="left:497.72px;top:326.97px;width:600px;font-size:9.6px;line-height:9.6px;color:#fff;font-weight:normal;text-align:right;">0</div>
<svg class="r" style="left:1110.87px;top:329.30px;" width="7" height="4" viewBox="0 0 7 4"><path d="M0 0 L6.5 0 L3.25 3.5 Z" fill="#222"/></svg>
<div class="r" style="left:1140.63px;top:319.30px;width:1.00px;height:24.10px;background:#f0f0f0"></div>
<div class="r" style="left:1144.60px;top:322.50px;width:36.50px;height:17.00px;background:#dd4b39"></div>
<div class="t" style="left:578.70px;top:326.97px;width:600px;font-size:9.6px;line-height:9.6px;color:#fff;font-weight:normal;text-align:right;">0</div>
<svg class="r" style="left:1191.85px;top:329.30px;" width="7" height="4" viewBox="0 0 7 4"><path d="M0 0 L6.5 0 L3.25 3.5 Z" fill="#222"/></svg>
<div class="r" style="left:239.00px;top:343.40px;width:920.00px;height:21.10px;background:#fff"></div>
<div class="r" style="left:412.00px;top:343.40px;width:1.00px;height:21.10px;background:#f0f0f0"></div>
<div class="r" style="left:239.00px;top:364.00px;width:920.00px;height:1.00px;background:#f0f0f0"></div>
<div class="t" style="left:256.60px;top:350.30px;width:600px;font-size:9.8px;line-height:9.8px;color:#3672a6;font-weight:bold;text-align:left;">Standard</div>
<svg class="r" style="left:305.27px;top:352.90px;" width="7" height="4" viewBox="0 0 7 4"><path d="M0 0 L6.5 0 L3.25 3.5 Z" fill="#3672a6"/></svg>
<div class="r" style="left:239.00px;top:364.50px;width:91.50px;height:49.50px;background:#fff"></div>
<div class="r" style="left:239.00px;top:413.50px;width:920.00px;height:1.00px;background:#eeeeee"></div>
<div class="t" style="left:-273.00px;top:370.00px;width:600px;font-size:8.5px;line-height:8.5px;color:#777;font-weight:normal;text-align:right;">status</div>
<div class="r" style="left:329.80px;top:364.50px;width:1.00px;height:49.50px;background:#f0f0f0"></div>
<div class="r" style="left:334.00px;top:369.10px;width:75.60px;height:9.10px;background:#93d092;border-radius:3px"></div>
<div class="r" style="left:411.90px;top:364.50px;width:1.00px;height:49.50px;background:#f0f0f0"></div>
<div class="r" style="left:414.98px;top:369.10px;width:75.60px;height:9.10px;background:#93d092;border-radius:3px"></div>
<div class="r" style="left:492.87px;top:364.50px;width:1.00px;height:49.50px;background:#f0f0f0"></div>
<div class="r" style="left:495.96px;top:369.10px;width:75.60px;height:9.10px;background:#93d092;border-radius:3px"></div>
<div class="r" style="left:573.84px;top:364.50px;width:1.00px;height:49.50px;background:#f0f0f0"></div>
<div class="r" style="left:576.94px;top:369.10px;width:75.60px;height:9.10px;background:#93d092;border-radius:3px"></div>
<div class="r" style="left:654.81px;top:364.50px;width:1.00px;height:49.50px;background:#f0f0f0"></div>
<div class="r" style="left:657.92px;top:369.10px;width:75.60px;height:9.10px;background:#93d092;border-radius:3px"></div>
<div class="r" style="left:735.78px;top:364.50px;width:1.00px;height:49.50px;background:#f0f0f0"></div>
<div class="r" style="left:736.78px;top:364.50px;width:79.97px;height:49.50px;background:#e4e6eb"></div>
<div class="r" style="left:738.90px;top:369.10px;width:75.60px;height:9.10px;background:#93d092;border-radius:3px"></div>
<div class="r" style="left:816.75px;top:364.50px;width:1.00px;height:49.50px;background:#f0f0f0"></div>
<div class="r" style="left:817.75px;top:364.50px;width:79.97px;height:49.50px;background:#e4e6eb"></div>
<div class="r" style="left:819.88px;top:369.10px;width:75.60px;height:9.10px;background:#93d092;border-radius:3px"></div>
<div class="r" style="left:897.72px;top:364.50px;width:1.00px;height:49.50px;background:#f0f0f0"></div>
<div class="r" style="left:900.86px;top:369.10px;width:75.60px;height:9.10px;background:#93d092;border-radius:3px"></div>
<div class="r" style="left:978.69px;top:364.50px;width:1.00px;height:49.50px;background:#f0f0f0"></div>
<div class="r" style="left:981.84px;top:369.10px;width:75.60px;height:9.10px;background:#93d092;border-radius:3px"></div>
<div class="r" style="left:1059.66px;top:364.50px;width:1.00px;height:49.50px;background:#f0f0f0"></div>
<div class="r" style="left:1062.82px;top:369.10px;width:75.60px;height:9.10px;background:#93d092;border-radius:3px"></div>
<div class="r" style="left:1140.63px;top:364.50px;width:1.00px;height:49.50px;background:#f0f0f0"></div>
<div class="r" style="left:1143.80px;top:369.10px;width:75.60px;height:9.10px;background:#93d092;border-radius:3px"></div>
<svg class="r" style="left:305.40px;top:391.10px;" width="10" height="11" viewBox="0 0 10 11"><circle cx="5" cy="3.6" r="2.9" fill="none" stroke="#999" stroke-width="1"/><path d="M0.8 10.3 C0.8 7 2.5 6.3 5 6.3 C7.5 6.3 9.2 7 9.2 10.3 Z" fill="none" stroke="#999" stroke-width="1" stroke-linejoin="round"/></svg>
<div class="t" style="left:316.90px;top:393.44px;width:600px;font-size:9.4px;line-height:9.4px;color:#999;font-weight:normal;text-align:left;">x1</div>
<div class="r" style="left:334.00px;top:389.10px;width:76.40px;height:18.30px;background:#eeeeee;border:1px solid #d9dbe0"></div>
<div class="t" style="left:-192.90px;top:394.10px;width:600px;font-size:9.8px;line-height:9.8px;color:#333;font-weight:normal;text-align:right;letter-spacing:-0.2px">230,00</div>
<div class="r" style="left:414.98px;top:389.10px;width:76.40px;height:18.30px;background:#eeeeee;border:1px solid #d9dbe0"></div>
<div class="t" style="left:-111.92px;top:394.10px;width:600px;font-size:9.8px;line-height:9.8px;color:#333;font-weight:normal;text-align:right;letter-spacing:-0.2px">230,00</div>
<div class="r" style="left:495.96px;top:389.10px;width:76.40px;height:18.30px;background:#eeeeee;border:1px solid #d9dbe0"></div>
<div class="t" style="left:-30.94px;top:394.10px;width:600px;font-size:9.8px;line-height:9.8px;color:#333;font-weight:normal;text-align:right;letter-spacing:-0.2px">230,00</div>
<div class="r" style="left:576.94px;top:389.10px;width:76.40px;height:18.30px;background:#eeeeee;border:1px solid #d9dbe0"></div>
<div class="t" style="left:50.04px;top:394.10px;width:600px;font-size:9.8px;line-height:9.8px;color:#333;font-weight:normal;text-align:right;letter-spacing:-0.2px">230,00</div>
<div class="r" style="left:657.92px;top:389.10px;width:76.40px;height:18.30px;background:#eeeeee;border:1px solid #d9dbe0"></div>
<div class="t" style="left:131.02px;top:394.10px;width:600px;font-size:9.8px;line-height:9.8px;color:#333;font-weight:normal;text-align:right;letter-spacing:-0.2px">100,00</div>
<div class="r" style="left:738.90px;top:389.10px;width:76.40px;height:18.30px;background:#eeeeee;border:1px solid #d9dbe0"></div>
<div class="t" style="left:212.00px;top:394.10px;width:600px;font-size:9.8px;line-height:9.8px;color:#333;font-weight:normal;text-align:right;letter-spacing:-0.2px">100,00</div>
<div class="r" style="left:819.88px;top:389.10px;width:76.40px;height:18.30px;background:#eeeeee;border:1px solid #d9dbe0"></div>
<div class="t" style="left:292.98px;top:394.10px;width:600px;font-size:9.8px;line-height:9.8px;color:#333;font-weight:normal;text-align:right;letter-spacing:-0.2px">135,00</div>
<div class="r" style="left:900.86px;top:389.10px;width:76.40px;height:18.30px;background:#eeeeee;border:1px solid #d9dbe0"></div>
<div class="t" style="left:373.96px;top:394.10px;width:600px;font-size:9.8px;line-height:9.8px;color:#333;font-weight:normal;text-align:right;letter-spacing:-0.2px">100,00</div>
<div class="r" style="left:981.84px;top:389.10px;width:76.40px;height:18.30px;background:#eeeeee;border:1px solid #d9dbe0"></div>
<div class="t" style="left:454.94px;top:394.10px;width:600px;font-size:9.8px;line-height:9.8px;color:#333;font-weight:normal;text-align:right;letter-spacing:-0.2px">87,00</div>
<div class="r" style="left:1062.82px;top:389.10px;width:76.40px;height:18.30px;background:#eeeeee;border:1px solid #d9dbe0"></div>
<div class="t" style="left:535.92px;top:394.10px;width:600px;font-size:9.8px;line-height:9.8px;color:#333;font-weight:normal;text-align:right;letter-spacing:-0.2px">100,00</div>
<div class="r" style="left:1143.80px;top:389.10px;width:76.40px;height:18.30px;background:#eeeeee;border:1px solid #d9dbe0"></div>
<div class="t" style="left:616.90px;top:394.10px;width:600px;font-size:9.8px;line-height:9.8px;color:#333;font-weight:normal;text-align:right;letter-spacing:-0.2px">100,00</div>
<div class="r" style="left:239.00px;top:414.00px;width:920.00px;height:21.70px;background:#f9f9f9"></div>
<div class="r" style="left:412.00px;top:414.00px;width:1.00px;height:21.70px;background:#f0f0f0"></div>
<div class="r" style="left:239.00px;top:435.20px;width:920.00px;height:1.00px;background:#f0f0f0"></div>
<div class="t" style="left:256.60px;top:420.90px;width:600px;font-size:9.8px;line-height:9.8px;color:#3672a6;font-weight:bold;text-align:left;">NR</div>
<svg class="r" style="left:276.95px;top:423.50px;" width="7" height="4" viewBox="0 0 7 4"><path d="M0 0 L6.5 0 L3.25 3.5 Z" fill="#3672a6"/></svg>
<div class="r" style="left:239.00px;top:435.70px;width:91.50px;height:49.50px;background:#f9f9f9"></div>
<div class="r" style="left:239.00px;top:484.70px;width:920.00px;height:1.00px;background:#eeeeee"></div>
<div class="t" style="left:-273.00px;top:441.20px;width:600px;font-size:8.5px;line-height:8.5px;color:#777;font-weight:normal;text-align:right;">status</div>
<div class="r" style="left:329.80px;top:435.70px;width:1.00px;height:49.50px;background:#f0f0f0"></div>
<div class="r" style="left:334.00px;top:440.30px;width:75.60px;height:9.10px;background:#93d092;border-radius:3px"></div>
<div class="r" style="left:411.90px;top:435.70px;width:1.00px;height:49.50px;background:#f0f0f0"></div>
<div class="r" style="left:414.98px;top:440.30px;width:75.60px;height:9.10px;background:#93d092;border-radius:3px"></div>
<div class="r" style="left:492.87px;top:435.70px;width:1.00px;height:49.50px;background:#f0f0f0"></div>
<div class="r" style="left:495.96px;top:440.30px;width:75.60px;height:9.10px;background:#93d092;border-radius:3px"></div>
<div class="r" style="left:573.84px;top:435.70px;width:1.00px;height:49.50px;background:#f0f0f0"></div>
<div class="r" style="left:576.94px;top:440.30px;width:75.60px;height:9.10px;background:#93d092;border-radius:3px"></div>
<div class="r" style="left:654.81px;top:435.70px;width:1.00px;height:49.50px;background:#f0f0f0"></div>
<div class="r" style="left:657.92px;top:440.30px;width:75.60px;height:9.10px;background:#e88a85;border-radius:3px"></div>
<div class="r" style="left:735.78px;top:435.70px;width:1.00px;height:49.50px;background:#f0f0f0"></div>
<div class="r" style="left:736.78px;top:435.70px;width:79.97px;height:49.50px;background:#e4e6eb"></div>
<div class="r" style="left:738.90px;top:440.30px;width:75.60px;height:9.10px;background:#e88a85;border-radius:3px"></div>
<div class="r" style="left:816.75px;top:435.70px;width:1.00px;height:49.50px;background:#f0f0f0"></div>
<div class="r" style="left:817.75px;top:435.70px;width:79.97px;height:49.50px;background:#e4e6eb"></div>
<div class="r" style="left:819.88px;top:440.30px;width:75.60px;height:9.10px;background:#e88a85;border-radius:3px"></div>
<div class="r" style="left:897.72px;top:435.70px;width:1.00px;height:49.50px;background:#f0f0f0"></div>
<div class="r" style="left:900.86px;top:440.30px;width:75.60px;height:9.10px;background:#93d092;border-radius:3px"></div>
<div class="r" style="left:978.69px;top:435.70px;width:1.00px;height:49.50px;background:#f0f0f0"></div>
<div class="r" style="left:981.84px;top:440.30px;width:75.60px;height:9.10px;background:#93d092;border-radius:3px"></div>
<div class="r" style="left:1059.66px;top:435.70px;width:1.00px;height:49.50px;background:#f0f0f0"></div>
<div class="r" style="left:1062.82px;top:440.30px;width:75.60px;height:9.10px;background:#93d092;border-radius:3px"></div>
<div class="r" style="left:1140.63px;top:435.70px;width:1.00px;height:49.50px;background:#f0f0f0"></div>
<div class="r" style="left:1143.80px;top:440.30px;width:75.60px;height:9.10px;background:#93d092;border-radius:3px"></div>
<svg class="r" style="left:305.40px;top:462.30px;" width="10" height="11" viewBox="0 0 10 11"><circle cx="5" cy="3.6" r="2.9" fill="none" stroke="#999" stroke-width="1"/><path d="M0.8 10.3 C0.8 7 2.5 6.3 5 6.3 C7.5 6.3 9.2 7 9.2 10.3 Z" fill="none" stroke="#999" stroke-width="1" stroke-linejoin="round"/></svg>
<div class="t" style="left:316.90px;top:464.64px;width:600px;font-size:9.4px;line-height:9.4px;color:#999;font-weight:normal;text-align:left;">x1</div>
<div class="r" style="left:334.00px;top:460.30px;width:76.40px;height:18.30px;background:#eeeeee;border:1px solid #d9dbe0"></div>
<div class="t" style="left:-192.90px;top:465.30px;width:600px;font-size:9.8px;line-height:9.8px;color:#333;font-weight:normal;text-align:right;letter-spacing:-0.2px">218,00</div>
<div class="r" style="left:414.98px;top:460.30px;width:76.40px;height:18.30px;background:#eeeeee;border:1px solid #d9dbe0"></div>
<div class="t" style="left:-111.92px;top:465.30px;width:600px;font-size:9.8px;line-height:9.8px;color:#333;font-weight:normal;text-align:right;letter-spacing:-0.2px">218,00</div>
<div class="r" style="left:495.96px;top:460.30px;width:76.40px;height:18.30px;background:#eeeeee;border:1px solid #d9dbe0"></div>
<div class="t" style="left:-30.94px;top:465.30px;width:600px;font-size:9.8px;line-height:9.8px;color:#333;font-weight:normal;text-align:right;letter-spacing:-0.2px">218,00</div>
<div class="r" style="left:576.94px;top:460.30px;width:76.40px;height:18.30px;background:#eeeeee;border:1px solid #d9dbe0"></div>
<div class="t" style="left:50.04px;top:465.30px;width:600px;font-size:9.8px;line-height:9.8px;color:#333;font-weight:normal;text-align:right;letter-spacing:-0.2px">218,00</div>
<div class="r" style="left:657.92px;top:460.30px;width:76.40px;height:18.30px;background:#eeeeee;border:1px solid #d9dbe0"></div>
<div class="t" style="left:131.02px;top:465.30px;width:600px;font-size:9.8px;line-height:9.8px;color:#333;font-weight:normal;text-align:right;letter-spacing:-0.2px">94,00</div>
<div class="r" style="left:738.90px;top:460.30px;width:76.40px;height:18.30px;background:#eeeeee;border:1px solid #d9dbe0"></div>
<div class="t" style="left:212.00px;top:465.30px;width:600px;font-size:9.8px;line-height:9.8px;color:#333;font-weight:normal;text-align:right;letter-spacing:-0.2px">94,00</div>
<div class="r" style="left:819.88px;top:460.30px;width:76.40px;height:18.30px;background:#eeeeee;border:1px solid #d9dbe0"></div>
<div class="t" style="left:292.98px;top:465.30px;width:600px;font-size:9.8px;line-height:9.8px;color:#333;font-weight:normal;text-align:right;letter-spacing:-0.2px">128,00</div>
<div class="r" style="left:900.86px;top:460.30px;width:76.40px;height:18.30px;background:#eeeeee;border:1px solid #d9dbe0"></div>
<div class="t" style="left:373.96px;top:465.30px;width:600px;font-size:9.8px;line-height:9.8px;color:#333;font-weight:normal;text-align:right;letter-spacing:-0.2px">94,00</div>
<div class="r" style="left:981.84px;top:460.30px;width:76.40px;height:18.30px;background:#eeeeee;border:1px solid #d9dbe0"></div>
<div class="t" style="left:454.94px;top:465.30px;width:600px;font-size:9.8px;line-height:9.8px;color:#333;font-weight:normal;text-align:right;letter-spacing:-0.2px">82,00</div>
<div class="r" style="left:1062.82px;top:460.30px;width:76.40px;height:18.30px;background:#eeeeee;border:1px solid #d9dbe0"></div>
<div class="t" style="left:535.92px;top:465.30px;width:600px;font-size:9.8px;line-height:9.8px;color:#333;font-weight:normal;text-align:right;letter-spacing:-0.2px">94,00</div>
<div class="r" style="left:1143.80px;top:460.30px;width:76.40px;height:18.30px;background:#eeeeee;border:1px solid #d9dbe0"></div>
<div class="t" style="left:616.90px;top:465.30px;width:600px;font-size:9.8px;line-height:9.8px;color:#333;font-weight:normal;text-align:right;letter-spacing:-0.2px">94,00</div>
<div class="r" style="left:238.50px;top:485.20px;width:920.50px;height:34.30px;background:#d2d6de"></div>
<div class="t" style="left:248.70px;top:492.97px;width:600px;font-size:9.6px;line-height:9.6px;color:#111;font-weight:bold;text-align:left;letter-spacing:0.05px">Double con vista balcon</div>
<svg class="r" style="left:362.12px;top:494.50px;" width="8" height="5" viewBox="0 0 8 5"><path d="M0 0 L7 0 L3.5 4 Z" fill="#111"/></svg>
<div class="t" style="left:247.00px;top:506.94px;width:600px;font-size:8.1px;line-height:8.1px;color:#444;font-weight:normal;text-align:left;">(3661)</div>
<div class="r" style="left:239.00px;top:519.50px;width:920.00px;height:24.00px;background:#f9f9f9"></div>
<div class="r" style="left:239.00px;top:543.00px;width:920.00px;height:1.00px;background:#eeeeee"></div>
<div class="t" style="left:-273.00px;top:524.52px;width:600px;font-size:8.6px;line-height:8.6px;color:#777;font-weight:normal;text-align:right;">rooms to sell</div>
<div class="r" style="left:329.80px;top:519.50px;width:1.00px;height:24.00px;background:#f0f0f0"></div>
<div class="r" style="left:334.80px;top:522.70px;width:36.50px;height:17.00px;background:#fff;border:1px solid #d9dbe0"></div>
<div class="t" style="left:-231.10px;top:527.17px;width:600px;font-size:9.6px;line-height:9.6px;color:#333;font-weight:normal;text-align:right;">15</div>
<svg class="r" style="left:382.05px;top:529.50px;" width="7" height="4" viewBox="0 0 7 4"><path d="M0 0 L6.5 0 L3.25 3.5 Z" fill="#222"/></svg>
<div class="r" style="left:411.90px;top:519.50px;width:1.00px;height:24.00px;background:#f0f0f0"></div>
<div class="r" style="left:415.78px;top:522.70px;width:36.50px;height:17.00px;background:#fff;border:1px solid #d9dbe0"></div>
<div class="t" style="left:-150.12px;top:527.17px;width:600px;font-size:9.6px;line-height:9.6px;color:#333;font-weight:normal;text-align:right;">15</div>
<svg class="r" style="left:463.03px;top:529.50px;" width="7" height="4" viewBox="0 0 7 4"><path d="M0 0 L6.5 0 L3.25 3.5 Z" fill="#222"/></svg>
<div class="r" style="left:492.87px;top:519.50px;width:1.00px;height:24.00px;background:#f0f0f0"></div>
<div class="r" style="left:496.76px;top:522.70px;width:36.50px;height:17.00px;background:#dd4b39"></div>
<div class="t" style="left:-69.14px;top:527.17px;width:600px;font-size:9.6px;line-height:9.6px;color:#fff;font-weight:normal;text-align:right;">0</div>
<svg class="r" style="left:544.01px;top:529.50px;" width="7" height="4" viewBox="0 0 7 4"><path d="M0 0 L6.5 0 L3.25 3.5 Z" fill="#222"/></svg>
<div class="r" style="left:573.84px;top:519.50px;width:1.00px;height:24.00px;background:#f0f0f0"></div>
<div class="r" style="left:577.74px;top:522.70px;width:36.50px;height:17.00px;background:#fff;border:1px solid #d9dbe0"></div>
<div class="t" style="left:11.84px;top:527.17px;width:600px;font-size:9.6px;line-height:9.6px;color:#333;font-weight:normal;text-align:right;">15</div>
<svg class="r" style="left:624.99px;top:529.50px;" width="7" height="4" viewBox="0 0 7 4"><path d="M0 0 L6.5 0 L3.25 3.5 Z" fill="#222"/></svg>
<div class="r" style="left:654.81px;top:519.50px;width:1.00px;height:24.00px;background:#f0f0f0"></div>
<div class="r" style="left:658.72px;top:522.70px;width:36.50px;height:17.00px;background:#dd4b39"></div>
<div class="t" style="left:92.82px;top:527.17px;width:600px;font-size:9.6px;line-height:9.6px;color:#fff;font-weight:normal;text-align:right;">0</div>
<svg class="r" style="left:705.97px;top:529.50px;" width="7" height="4" viewBox="0 0 7 4"><path d="M0 0 L6.5 0 L3.25 3.5 Z" fill="#222"/></svg>
<div class="r" style="left:735.78px;top:519.50px;width:1.00px;height:24.00px;background:#f0f0f0"></div>
<div class="r" style="left:736.78px;top:519.50px;width:79.97px;height:24.00px;background:#e4e6eb"></div>
<div class="r" style="left:739.70px;top:522.70px;width:36.50px;height:17.00px;background:#fff;border:1px solid #d9dbe0"></div>
<div class="t" style="left:173.80px;top:527.17px;width:600px;font-size:9.6px;line-height:9.6px;color:#333;font-weight:normal;text-align:right;">15</div>
<svg class="r" style="left:786.95px;top:529.50px;" width="7" height="4" viewBox="0 0 7 4"><path d="M0 0 L6.5 0 L3.25 3.5 Z" fill="#222"/></svg>
<div class="r" style="left:816.75px;top:519.50px;width:1.00px;height:24.00px;background:#f0f0f0"></div>
<div class="r" style="left:817.75px;top:519.50px;width:79.97px;height:24.00px;background:#e4e6eb"></div>
<div class="r" style="left:820.68px;top:522.70px;width:36.50px;height:17.00px;background:#fff;border:1px solid #d9dbe0"></div>
<div class="t" style="left:254.78px;top:527.17px;width:600px;font-size:9.6px;line-height:9.6px;color:#333;font-weight:normal;text-align:right;">15</div>
<svg class="r" style="left:867.93px;top:529.50px;" width="7" height="4" viewBox="0 0 7 4"><path d="M0 0 L6.5 0 L3.25 3.5 Z" fill="#222"/></svg>
<div class="r" style="left:897.72px;top:519.50px;width:1.00px;height:24.00px;background:#f0f0f0"></div>
<div class="r" style="left:901.66px;top:522.70px;width:36.50px;height:17.00px;background:#dd4b39"></div>
<div class="t" style="left:335.76px;top:527.17px;width:600px;font-size:9.6px;line-height:9.6px;color:#fff;font-weight:normal;text-align:right;">0</div>
<svg class="r" style="left:948.91px;top:529.50px;" width="7" height="4" viewBox="0 0 7 4"><path d="M0 0 L6.5 0 L3.25 3.5 Z" fill="#222"/></svg>
<div class="r" style="left:978.69px;top:519.50px;width:1.00px;height:24.00px;background:#f0f0f0"></div>
<div class="r" style="left:982.64px;top:522.70px;width:36.50px;height:17.00px;background:#fff;border:1px solid #d9dbe0"></div>
<div class="t" style="left:416.74px;top:527.17px;width:600px;font-size:9.6px;line-height:9.6px;color:#333;font-weight:normal;text-align:right;">15</div>
<svg class="r" style="left:1029.89px;top:529.50px;" width="7" height="4" viewBox="0 0 7 4"><path d="M0 0 L6.5 0 L3.25 3.5 Z" fill="#222"/></svg>
<div class="r" style="left:1059.66px;top:519.50px;width:1.00px;height:24.00px;background:#f0f0f0"></div>
<div class="r" style="left:1063.62px;top:522.70px;width:36.50px;height:17.00px;background:#fff;border:1px solid #d9dbe0"></div>
<div class="t" style="left:497.72px;top:527.17px;width:600px;font-size:9.6px;line-height:9.6px;color:#333;font-weight:normal;text-align:right;">15</div>
<svg class="r" style="left:1110.87px;top:529.50px;" width="7" height="4" viewBox="0 0 7 4"><path d="M0 0 L6.5 0 L3.25 3.5 Z" fill="#222"/></svg>
<div class="r" style="left:1140.63px;top:519.50px;width:1.00px;height:24.00px;background:#f0f0f0"></div>
<div class="r" style="left:1144.60px;top:522.70px;width:36.50px;height:17.00px;background:#fff;border:1px solid #d9dbe0"></div>
<div class="t" style="left:578.70px;top:527.17px;width:600px;font-size:9.6px;line-height:9.6px;color:#333;font-weight:normal;text-align:right;">15</div>
<svg class="r" style="left:1191.85px;top:529.50px;" width="7" height="4" viewBox="0 0 7 4"><path d="M0 0 L6.5 0 L3.25 3.5 Z" fill="#222"/></svg>
<div class="r" style="left:239.00px;top:543.50px;width:920.00px;height:20.50px;background:#fff"></div>
<div class="r" style="left:412.00px;top:543.50px;width:1.00px;height:20.50px;background:#f0f0f0"></div>
<div class="r" style="left:239.00px;top:563.50px;width:920.00px;height:1.00px;background:#f0f0f0"></div>
<div class="t" style="left:256.60px;top:550.40px;width:600px;font-size:9.8px;line-height:9.8px;color:#3672a6;font-weight:bold;text-align:left;">Standard</div>
<svg class="r" style="left:305.27px;top:553.00px;" width="7" height="4" viewBox="0 0 7 4"><path d="M0 0 L6.5 0 L3.25 3.5 Z" fill="#3672a6"/></svg>
<div class="r" style="left:239.00px;top:564.00px;width:91.50px;height:72.50px;background:#fff"></div>
<div class="r" style="left:239.00px;top:636.00px;width:920.00px;height:1.00px;background:#eeeeee"></div>
<div class="t" style="left:-273.00px;top:569.50px;width:600px;font-size:8.5px;line-height:8.5px;color:#777;font-weight:normal;text-align:right;">status</div>
<div class="r" style="left:329.80px;top:564.00px;width:1.00px;height:72.50px;background:#f0f0f0"></div>
<div class="r" style="left:334.00px;top:568.60px;width:75.60px;height:9.10px;background:#93d092;border-radius:3px"></div>
<div class="r" style="left:411.90px;top:564.00px;width:1.00px;height:72.50px;background:#f0f0f0"></div>
<div class="r" style="left:414.98px;top:568.60px;width:75.60px;height:9.10px;background:#f2c68a;border-radius:3px"></div>
<div class="r" style="left:492.87px;top:564.00px;width:1.00px;height:72.50px;background:#f0f0f0"></div>
<div class="r" style="left:495.96px;top:568.60px;width:75.60px;height:9.10px;background:#93d092;border-radius:3px"></div>
<div class="r" style="left:573.84px;top:564.00px;width:1.00px;height:72.50px;background:#f0f0f0"></div>
<div class="r" style="left:576.94px;top:568.60px;width:75.60px;height:9.10px;background:#f2c68a;border-radius:3px"></div>
<div class="r" style="left:654.81px;top:564.00px;width:1.00px;height:72.50px;background:#f0f0f0"></div>
<div class="r" style="left:657.92px;top:568.60px;width:75.60px;height:9.10px;background:#93d092;border-radius:3px"></div>
<div class="r" style="left:735.78px;top:564.00px;width:1.00px;height:72.50px;background:#f0f0f0"></div>
<div class="r" style="left:736.78px;top:564.00px;width:79.97px;height:72.50px;background:#e4e6eb"></div>
<div class="r" style="left:738.90px;top:568.60px;width:75.60px;height:9.10px;background:#e88a85;border-radius:3px"></div>
<div class="r" style="left:816.75px;top:564.00px;width:1.00px;height:72.50px;background:#f0f0f0"></div>
<div class="r" style="left:817.75px;top:564.00px;width:79.97px;height:72.50px;background:#e4e6eb"></div>
<div class="r" style="left:819.88px;top:568.60px;width:75.60px;height:9.10px;background:#93d092;border-radius:3px"></div>
<div class="r" style="left:897.72px;top:564.00px;width:1.00px;height:72.50px;background:#f0f0f0"></div>
<div class="r" style="left:900.86px;top:568.60px;width:75.60px;height:9.10px;background:#f2c68a;border-radius:3px"></div>
<div class="r" style="left:978.69px;top:564.00px;width:1.00px;height:72.50px;background:#f0f0f0"></div>
<div class="r" style="left:981.84px;top:568.60px;width:75.60px;height:9.10px;background:#f2c68a;border-radius:3px"></div>
<div class="r" style="left:1059.66px;top:564.00px;width:1.00px;height:72.50px;background:#f0f0f0"></div>
<div class="r" style="left:1062.82px;top:568.60px;width:75.60px;height:9.10px;background:#93d092;border-radius:3px"></div>
<div class="r" style="left:1140.63px;top:564.00px;width:1.00px;height:72.50px;background:#f0f0f0"></div>
<div class="r" style="left:1143.80px;top:568.60px;width:75.60px;height:9.10px;background:#93d092;border-radius:3px"></div>
<svg class="r" style="left:305.40px;top:590.60px;" width="10" height="11" viewBox="0 0 10 11"><circle cx="5" cy="3.6" r="2.9" fill="none" stroke="#999" stroke-width="1"/><path d="M0.8 10.3 C0.8 7 2.5 6.3 5 6.3 C7.5 6.3 9.2 7 9.2 10.3 Z" fill="none" stroke="#999" stroke-width="1" stroke-linejoin="round"/></svg>
<div class="t" style="left:316.90px;top:592.94px;width:600px;font-size:9.4px;line-height:9.4px;color:#999;font-weight:normal;text-align:left;">x2</div>
<div class="r" style="left:334.00px;top:588.60px;width:76.40px;height:18.30px;background:#fff;border:1px solid #d9dbe0"></div>
<div class="t" style="left:-192.90px;top:593.60px;width:600px;font-size:9.8px;line-height:9.8px;color:#333;font-weight:normal;text-align:right;letter-spacing:-0.2px">250,00</div>
<div class="r" style="left:414.98px;top:588.60px;width:76.40px;height:18.30px;background:#fff;border:1px solid #d9dbe0"></div>
<div class="t" style="left:-111.92px;top:593.60px;width:600px;font-size:9.8px;line-height:9.8px;color:#333;font-weight:normal;text-align:right;letter-spacing:-0.2px">250,00</div>
<div class="r" style="left:495.96px;top:588.60px;width:76.40px;height:18.30px;background:#fff;border:1px solid #d9dbe0"></div>
<div class="t" style="left:-30.94px;top:593.60px;width:600px;font-size:9.8px;line-height:9.8px;color:#333;font-weight:normal;text-align:right;letter-spacing:-0.2px">250,00</div>
<div class="r" style="left:576.94px;top:588.60px;width:76.40px;height:18.30px;background:#fff;border:1px solid #d9dbe0"></div>
<div class="t" style="left:50.04px;top:593.60px;width:600px;font-size:9.8px;line-height:9.8px;color:#333;font-weight:normal;text-align:right;letter-spacing:-0.2px">250,00</div>
<div class="r" style="left:657.92px;top:588.60px;width:76.40px;height:18.30px;background:#fff;border:1px solid #d9dbe0"></div>
<div class="t" style="left:131.02px;top:593.60px;width:600px;font-size:9.8px;line-height:9.8px;color:#333;font-weight:normal;text-align:right;letter-spacing:-0.2px">120,00</div>
<div class="r" style="left:738.90px;top:588.60px;width:76.40px;height:18.30px;background:#fff;border:1px solid #d9dbe0"></div>
<div class="t" style="left:212.00px;top:593.60px;width:600px;font-size:9.8px;line-height:9.8px;color:#333;font-weight:normal;text-align:right;letter-spacing:-0.2px">120,00</div>
<div class="r" style="left:819.88px;top:588.60px;width:76.40px;height:18.30px;background:#fff;border:1px solid #d9dbe0"></div>
<div class="t" style="left:292.98px;top:593.60px;width:600px;font-size:9.8px;line-height:9.8px;color:#333;font-weight:normal;text-align:right;letter-spacing:-0.2px">155,00</div>
<div class="r" style="left:900.86px;top:588.60px;width:76.40px;height:18.30px;background:#fff;border:1px solid #d9dbe0"></div>
<div class="t" style="left:373.96px;top:593.60px;width:600px;font-size:9.8px;line-height:9.8px;color:#333;font-weight:normal;text-align:right;letter-spacing:-0.2px">120,00</div>
<div class="r" style="left:981.84px;top:588.60px;width:76.40px;height:18.30px;background:#fff;border:1px solid #d9dbe0"></div>
<div class="t" style="left:454.94px;top:593.60px;width:600px;font-size:9.8px;line-height:9.8px;color:#333;font-weight:normal;text-align:right;letter-spacing:-0.2px">107,00</div>
<div class="r" style="left:1062.82px;top:588.60px;width:76.40px;height:18.30px;background:#fff;border:1px solid #d9dbe0"></div>
<div class="t" style="left:535.92px;top:593.60px;width:600px;font-size:9.8px;line-height:9.8px;color:#333;font-weight:normal;text-align:right;letter-spacing:-0.2px">120,00</div>
<div class="r" style="left:1143.80px;top:588.60px;width:76.40px;height:18.30px;background:#fff;border:1px solid #d9dbe0"></div>
<div class="t" style="left:616.90px;top:593.60px;width:600px;font-size:9.8px;line-height:9.8px;color:#333;font-weight:normal;text-align:right;letter-spacing:-0.2px">120,00</div>
<svg class="r" style="left:305.40px;top:612.90px;" width="10" height="11" viewBox="0 0 10 11"><circle cx="5" cy="3.6" r="2.9" fill="none" stroke="#999" stroke-width="1"/><path d="M0.8 10.3 C0.8 7 2.5 6.3 5 6.3 C7.5 6.3 9.2 7 9.2 10.3 Z" fill="none" stroke="#999" stroke-width="1" stroke-linejoin="round"/></svg>
<div class="t" style="left:316.90px;top:615.24px;width:600px;font-size:9.4px;line-height:9.4px;color:#999;font-weight:normal;text-align:left;">x1</div>
<div class="r" style="left:334.00px;top:610.90px;width:76.40px;height:18.30px;background:#eeeeee;border:1px solid #d9dbe0"></div>
<div class="t" style="left:-192.90px;top:615.90px;width:600px;font-size:9.8px;line-height:9.8px;color:#333;font-weight:normal;text-align:right;letter-spacing:-0.2px">245,00</div>
<div class="r" style="left:414.98px;top:610.90px;width:76.40px;height:18.30px;background:#eeeeee;border:1px solid #d9dbe0"></div>
<div class="t" style="left:-111.92px;top:615.90px;width:600px;font-size:9.8px;line-height:9.8px;color:#333;font-weight:normal;text-align:right;letter-spacing:-0.2px">245,00</div>
<div class="r" style="left:495.96px;top:610.90px;width:76.40px;height:18.30px;background:#eeeeee;border:1px solid #d9dbe0"></div>
<div class="t" style="left:-30.94px;top:615.90px;width:600px;font-size:9.8px;line-height:9.8px;color:#333;font-weight:normal;text-align:right;letter-spacing:-0.2px">245,00</div>
<div class="r" style="left:576.94px;top:610.90px;width:76.40px;height:18.30px;background:#eeeeee;border:1px solid #d9dbe0"></div>
<div class="t" style="left:50.04px;top:615.90px;width:600px;font-size:9.8px;line-height:9.8px;color:#333;font-weight:normal;text-align:right;letter-spacing:-0.2px">245,00</div>
<div class="r" style="left:657.92px;top:610.90px;width:76.40px;height:18.30px;background:#eeeeee;border:1px solid #d9dbe0"></div>
<div class="t" style="left:131.02px;top:615.90px;width:600px;font-size:9.8px;line-height:9.8px;color:#333;font-weight:normal;text-align:right;letter-spacing:-0.2px">115,00</div>
<div class="r" style="left:738.90px;top:610.90px;width:76.40px;height:18.30px;background:#eeeeee;border:1px solid #d9dbe0"></div>
<div class="t" style="left:212.00px;top:615.90px;width:600px;font-size:9.8px;line-height:9.8px;color:#333;font-weight:normal;text-align:right;letter-spacing:-0.2px">115,00</div>
<div class="r" style="left:819.88px;top:610.90px;width:76.40px;height:18.30px;background:#eeeeee;border:1px solid #d9dbe0"></div>
<div class="t" style="left:292.98px;top:615.90px;width:600px;font-size:9.8px;line-height:9.8px;color:#333;font-weight:normal;text-align:right;letter-spacing:-0.2px">150,00</div>
<div class="r" style="left:900.86px;top:610.90px;width:76.40px;height:18.30px;background:#eeeeee;border:1px solid #d9dbe0"></div>
<div class="t" style="left:373.96px;top:615.90px;width:600px;font-size:9.8px;line-height:9.8px;color:#333;font-weight:normal;text-align:right;letter-spacing:-0.2px">115,00</div>
<div class="r" style="left:981.84px;top:610.90px;width:76.40px;height:18.30px;background:#eeeeee;border:1px solid #d9dbe0"></div>
<div class="t" style="left:454.94px;top:615.90px;width:600px;font-size:9.8px;line-height:9.8px;color:#333;font-weight:normal;text-align:right;letter-spacing:-0.2px">102,00</div>
<div class="r" style="left:1062.82px;top:610.90px;width:76.40px;height:18.30px;background:#eeeeee;border:1px solid #d9dbe0"></div>
<div class="t" style="left:535.92px;top:615.90px;width:600px;font-size:9.8px;line-height:9.8px;color:#333;font-weight:normal;text-align:right;letter-spacing:-0.2px">115,00</div>
<div class="r" style="left:1143.80px;top:610.90px;width:76.40px;height:18.30px;background:#eeeeee;border:1px solid #d9dbe0"></div>
<div class="t" style="left:616.90px;top:615.90px;width:600px;font-size:9.8px;line-height:9.8px;color:#333;font-weight:normal;text-align:right;letter-spacing:-0.2px">115,00</div>
<div class="r" style="left:239.00px;top:636.50px;width:920.00px;height:20.80px;background:#f9f9f9"></div>
<div class="r" style="left:412.00px;top:636.50px;width:1.00px;height:20.80px;background:#f0f0f0"></div>
<div class="r" style="left:239.00px;top:656.80px;width:920.00px;height:1.00px;background:#f0f0f0"></div>
<div class="t" style="left:256.60px;top:643.40px;width:600px;font-size:9.8px;line-height:9.8px;color:#3672a6;font-weight:bold;text-align:left;">NR</div>
<svg class="r" style="left:276.95px;top:646.00px;" width="7" height="4" viewBox="0 0 7 4"><path d="M0 0 L6.5 0 L3.25 3.5 Z" fill="#3672a6"/></svg>
<div class="r" style="left:239.00px;top:657.30px;width:91.50px;height:82.70px;background:#f9f9f9"></div>
<div class="r" style="left:239.00px;top:739.50px;width:920.00px;height:1.00px;background:#eeeeee"></div>
<div class="t" style="left:-273.00px;top:662.80px;width:600px;font-size:8.5px;line-height:8.5px;color:#777;font-weight:normal;text-align:right;">status</div>
<div class="r" style="left:329.80px;top:657.30px;width:1.00px;height:82.70px;background:#f0f0f0"></div>
<div class="r" style="left:334.00px;top:661.90px;width:75.60px;height:9.10px;background:#93d092;border-radius:3px"></div>
<div class="r" style="left:411.90px;top:657.30px;width:1.00px;height:82.70px;background:#f0f0f0"></div>
<div class="r" style="left:414.98px;top:661.90px;width:75.60px;height:9.10px;background:#93d092;border-radius:3px"></div>
<div class="r" style="left:492.87px;top:657.30px;width:1.00px;height:82.70px;background:#f0f0f0"></div>
<div class="r" style="left:495.96px;top:661.90px;width:75.60px;height:9.10px;background:#f2c68a;border-radius:3px"></div>
<div class="r" style="left:573.84px;top:657.30px;width:1.00px;height:82.70px;background:#f0f0f0"></div>
<div class="r" style="left:576.94px;top:661.90px;width:75.60px;height:9.10px;background:#93d092;border-radius:3px"></div>
<div class="r" style="left:654.81px;top:657.30px;width:1.00px;height:82.70px;background:#f0f0f0"></div>
<div class="r" style="left:657.92px;top:661.90px;width:75.60px;height:9.10px;background:#93d092;border-radius:3px"></div>
<div class="r" style="left:735.78px;top:657.30px;width:1.00px;height:82.70px;background:#f0f0f0"></div>
<div class="r" style="left:736.78px;top:657.30px;width:79.97px;height:82.70px;background:#e4e6eb"></div>
<div class="r" style="left:738.90px;top:661.90px;width:75.60px;height:9.10px;background:#e88a85;border-radius:3px"></div>
<div class="r" style="left:816.75px;top:657.30px;width:1.00px;height:82.70px;background:#f0f0f0"></div>
<div class="r" style="left:817.75px;top:657.30px;width:79.97px;height:82.70px;background:#e4e6eb"></div>
<div class="r" style="left:819.88px;top:661.90px;width:75.60px;height:9.10px;background:#93d092;border-radius:3px"></div>
<div class="r" style="left:897.72px;top:657.30px;width:1.00px;height:82.70px;background:#f0f0f0"></div>
<div class="r" style="left:900.86px;top:661.90px;width:75.60px;height:9.10px;background:#93d092;border-radius:3px"></div>
<div class="r" style="left:978.69px;top:657.30px;width:1.00px;height:82.70px;background:#f0f0f0"></div>
<div class="r" style="left:981.84px;top:661.90px;width:75.60px;height:9.10px;background:#93d092;border-radius:3px"></div>
<div class="r" style="left:1059.66px;top:657.30px;width:1.00px;height:82.70px;background:#f0f0f0"></div>
<div class="r" style="left:1062.82px;top:661.90px;width:75.60px;height:9.10px;background:#93d092;border-radius:3px"></div>
<div class="r" style="left:1140.63px;top:657.30px;width:1.00px;height:82.70px;background:#f0f0f0"></div>
<div class="r" style="left:1143.80px;top:661.90px;width:75.60px;height:9.10px;background:#93d092;border-radius:3px"></div>
<svg class="r" style="left:305.40px;top:683.90px;" width="10" height="11" viewBox="0 0 10 11"><circle cx="5" cy="3.6" r="2.9" fill="none" stroke="#999" stroke-width="1"/><path d="M0.8 10.3 C0.8 7 2.5 6.3 5 6.3 C7.5 6.3 9.2 7 9.2 10.3 Z" fill="none" stroke="#999" stroke-width="1" stroke-linejoin="round"/></svg>
<div class="t" style="left:316.90px;top:686.24px;width:600px;font-size:9.4px;line-height:9.4px;color:#999;font-weight:normal;text-align:left;">x2</div>
<div class="r" style="left:334.00px;top:681.90px;width:76.40px;height:18.30px;background:#eeeeee;border:1px solid #d9dbe0"></div>
<div class="t" style="left:-192.90px;top:686.90px;width:600px;font-size:9.8px;line-height:9.8px;color:#333;font-weight:normal;text-align:right;letter-spacing:-0.2px">238,00</div>
<div class="r" style="left:414.98px;top:681.90px;width:76.40px;height:18.30px;background:#eeeeee;border:1px solid #d9dbe0"></div>
<div class="t" style="left:-111.92px;top:686.90px;width:600px;font-size:9.8px;line-height:9.8px;color:#333;font-weight:normal;text-align:right;letter-spacing:-0.2px">238,00</div>
<div class="r" style="left:495.96px;top:681.90px;width:76.40px;height:18.30px;background:#eeeeee;border:1px solid #d9dbe0"></div>
<div class="t" style="left:-30.94px;top:686.90px;width:600px;font-size:9.8px;line-height:9.8px;color:#333;font-weight:normal;text-align:right;letter-spacing:-0.2px">238,00</div>
<div class="r" style="left:576.94px;top:681.90px;width:76.40px;height:18.30px;background:#eeeeee;border:1px solid #d9dbe0"></div>
<div class="t" style="left:50.04px;top:686.90px;width:600px;font-size:9.8px;line-height:9.8px;color:#333;font-weight:normal;text-align:right;letter-spacing:-0.2px">238,00</div>
<div class="r" style="left:657.92px;top:681.90px;width:76.40px;height:18.30px;background:#eeeeee;border:1px solid #d9dbe0"></div>
<div class="t" style="left:131.02px;top:686.90px;width:600px;font-size:9.8px;line-height:9.8px;color:#333;font-weight:normal;text-align:right;letter-spacing:-0.2px">114,00</div>
<div class="r" style="left:738.90px;top:681.90px;width:76.40px;height:18.30px;background:#eeeeee;border:1px solid #d9dbe0"></div>
<div class="t" style="left:212.00px;top:686.90px;width:600px;font-size:9.8px;line-height:9.8px;color:#333;font-weight:normal;text-align:right;letter-spacing:-0.2px">114,00</div>
<div class="r" style="left:819.88px;top:681.90px;width:76.40px;height:18.30px;background:#eeeeee;border:1px solid #d9dbe0"></div>
<div class="t" style="left:292.98px;top:686.90px;width:600px;font-size:9.8px;line-height:9.8px;color:#333;font-weight:normal;text-align:right;letter-spacing:-0.2px">148,00</div>
<div class="r" style="left:900.86px;top:681.90px;width:76.40px;height:18.30px;background:#eeeeee;border:1px solid #d9dbe0"></div>
<div class="t" style="left:373.96px;top:686.90px;width:600px;font-size:9.8px;line-height:9.8px;color:#333;font-weight:normal;text-align:right;letter-spacing:-0.2px">114,00</div>
<div class="r" style="left:981.84px;top:681.90px;width:76.40px;height:18.30px;background:#eeeeee;border:1px solid #d9dbe0"></div>
<div class="t" style="left:454.94px;top:686.90px;width:600px;font-size:9.8px;line-height:9.8px;color:#333;font-weight:normal;text-align:right;letter-spacing:-0.2px">102,00</div>
<div class="r" style="left:1062.82px;top:681.90px;width:76.40px;height:18.30px;background:#eeeeee;border:1px solid #d9dbe0"></div>
<div class="t" style="left:535.92px;top:686.90px;width:600px;font-size:9.8px;line-height:9.8px;color:#333;font-weight:normal;text-align:right;letter-spacing:-0.2px">114,00</div>
<div class="r" style="left:1143.80px;top:681.90px;width:76.40px;height:18.30px;background:#eeeeee;border:1px solid #d9dbe0"></div>
<div class="t" style="left:616.90px;top:686.90px;width:600px;font-size:9.8px;line-height:9.8px;color:#333;font-weight:normal;text-align:right;letter-spacing:-0.2px">114,00</div>
<svg class="r" style="left:305.40px;top:706.20px;" width="10" height="11" viewBox="0 0 10 11"><circle cx="5" cy="3.6" r="2.9" fill="none" stroke="#999" stroke-width="1"/><path d="M0.8 10.3 C0.8 7 2.5 6.3 5 6.3 C7.5 6.3 9.2 7 9.2 10.3 Z" fill="none" stroke="#999" stroke-width="1" stroke-linejoin="round"/></svg>
<div class="t" style="left:316.90px;top:708.54px;width:600px;font-size:9.4px;line-height:9.4px;color:#999;font-weight:normal;text-align:left;">x1</div>
<div class="r" style="left:334.00px;top:704.20px;width:76.40px;height:18.30px;background:#eeeeee;border:1px solid #d9dbe0"></div>
<div class="t" style="left:-192.90px;top:709.20px;width:600px;font-size:9.8px;line-height:9.8px;color:#333;font-weight:normal;text-align:right;letter-spacing:-0.2px">233,00</div>
<div class="r" style="left:414.98px;top:704.20px;width:76.40px;height:18.30px;background:#eeeeee;border:1px solid #d9dbe0"></div>
<div class="t" style="left:-111.92px;top:709.20px;width:600px;font-size:9.8px;line-height:9.8px;color:#333;font-weight:normal;text-align:right;letter-spacing:-0.2px">233,00</div>
<div class="r" style="left:495.96px;top:704.20px;width:76.40px;height:18.30px;background:#eeeeee;border:1px solid #d9dbe0"></div>
<div class="t" style="left:-30.94px;top:709.20px;width:600px;font-size:9.8px;line-height:9.8px;color:#333;font-weight:normal;text-align:right;letter-spacing:-0.2px">233,00</div>
<div class="r" style="left:576.94px;top:704.20px;width:76.40px;height:18.30px;background:#eeeeee;border:1px solid #d9dbe0"></div>
<div class="t" style="left:50.04px;top:709.20px;width:600px;font-size:9.8px;line-height:9.8px;color:#333;font-weight:normal;text-align:right;letter-spacing:-0.2px">233,00</div>
<div class="r" style="left:657.92px;top:704.20px;width:76.40px;height:18.30px;background:#eeeeee;border:1px solid #d9dbe0"></div>
<div class="t" style="left:131.02px;top:709.20px;width:600px;font-size:9.8px;line-height:9.8px;color:#333;font-weight:normal;text-align:right;letter-spacing:-0.2px">109,00</div>
<div class="r" style="left:738.90px;top:704.20px;width:76.40px;height:18.30px;background:#eeeeee;border:1px solid #d9dbe0"></div>
<div class="t" style="left:212.00px;top:709.20px;width:600px;font-size:9.8px;line-height:9.8px;color:#333;font-weight:normal;text-align:right;letter-spacing:-0.2px">109,00</div>
<div class="r" style="left:819.88px;top:704.20px;width:76.40px;height:18.30px;background:#eeeeee;border:1px solid #d9dbe0"></div>
<div class="t" style="left:292.98px;top:709.20px;width:600px;font-size:9.8px;line-height:9.8px;color:#333;font-weight:normal;text-align:right;letter-spacing:-0.2px">143,00</div>
<div class="r" style="left:900.86px;top:704.20px;width:76.40px;height:18.30px;background:#eeeeee;border:1px solid #d9dbe0"></div>
<div class="t" style="left:373.96px;top:709.20px;width:600px;font-size:9.8px;line-height:9.8px;color:#333;font-weight:normal;text-align:right;letter-spacing:-0.2px">109,00</div>
<div class="r" style="left:981.84px;top:704.20px;width:76.40px;height:18.30px;background:#eeeeee;border:1px solid #d9dbe0"></div>
<div class="t" style="left:454.94px;top:709.20px;width:600px;font-size:9.8px;line-height:9.8px;color:#333;font-weight:normal;text-align:right;letter-spacing:-0.2px">97,00</div>
<div class="r" style="left:1062.82px;top:704.20px;width:76.40px;height:18.30px;background:#eeeeee;border:1px solid #d9dbe0"></div>
<div class="t" style="left:535.92px;top:709.20px;width:600px;font-size:9.8px;line-height:9.8px;color:#333;font-weight:normal;text-align:right;letter-spacing:-0.2px">109,00</div>
<div class="r" style="left:1143.80px;top:704.20px;width:76.40px;height:18.30px;background:#eeeeee;border:1px solid #d9dbe0"></div>
<div class="t" style="left:616.90px;top:709.20px;width:600px;font-size:9.8px;line-height:9.8px;color:#333;font-weight:normal;text-align:right;letter-spacing:-0.2px">109,00</div>
</div>
</body></html>
